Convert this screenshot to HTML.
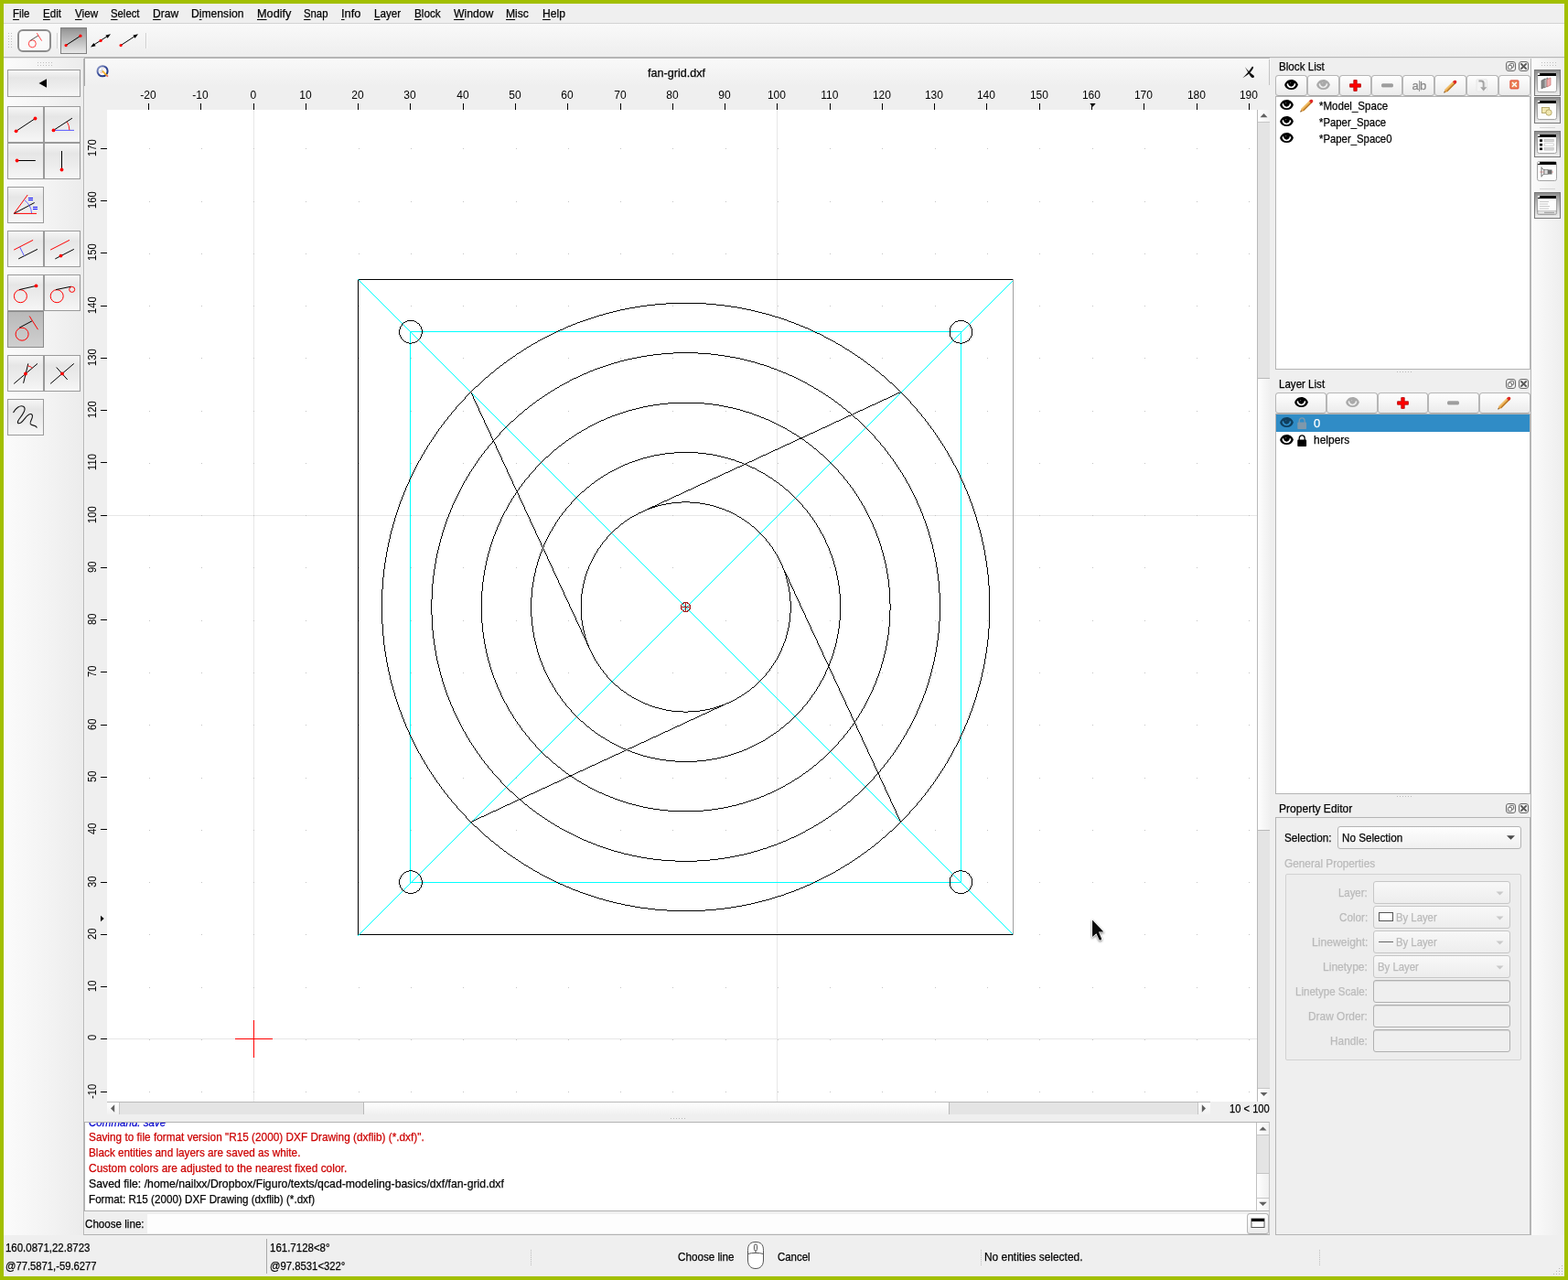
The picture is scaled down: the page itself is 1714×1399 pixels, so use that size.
<!DOCTYPE html>
<html><head><meta charset="utf-8"><title>QCAD - fan-grid.dxf</title>
<style>

html,body{margin:0;padding:0;}
body{width:1714px;height:1399px;overflow:hidden;background:#a2bf00;font-family:'Liberation Sans',sans-serif;font-size:12px;}
#win{position:absolute;left:0;top:0;width:1714px;height:1399px;overflow:hidden;}
#win div,#win span,#win svg{position:absolute;box-sizing:border-box;}
#txt{left:0;top:0;width:1714px;height:1399px;will-change:transform;}
.t{white-space:pre;line-height:1;font-family:'Liberation Sans',sans-serif;}
.t u{text-decoration:underline;text-underline-offset:1.5px;text-decoration-thickness:1px;}
.bg{left:4px;top:4px;width:1706px;height:1391px;background:#efefef;}
.btn{border:1px solid #9a9a9a;background:linear-gradient(#f6f6f6 0%,#e6e6e6 28%,#ececec 60%,#f6f6f6 100%);}
.btn.on{border-color:#8a8a8a;background:linear-gradient(#b9b9b9 0%,#c2c2c2 40%,#cfcfcf 100%);}
.pbtn{border:1px solid #b6b6b6;border-bottom-color:#a8a8a8;border-radius:3.5px;background:linear-gradient(#fefefe 0%,#f4f4f4 55%,#ebebeb 100%);}
.list{background:#fff;border:1px solid #b4b4b4;}
.combo{border:1px solid #b4b4b4;border-radius:3px;background:linear-gradient(#fefefe,#f0f0f0);}
.combo.dis{border-color:#c6c6c6;background:linear-gradient(#f8f8f8,#ededed);}
.edit{border:1px solid #b0b0b0;border-radius:3px;background:#efefef;box-shadow:inset 0 1px 0 #d6d6d6;}
.rbtn{border:1px solid #777;background:linear-gradient(#8c8c8c 0%,#b4b4b4 35%,#dedede 80%,#ededed 100%);}

</style></head>
<body>
<div id="win">
<div class="bg"></div>
<div style="left:4px;top:4px;width:1706px;height:21px;background:#efefef;"></div>
<div style="left:4px;top:25px;width:1706px;height:1px;background:#d3d3d3;"></div>
<div style="left:4px;top:26px;width:1706px;height:36px;background:linear-gradient(#f9f9f9,#eeeeee);"></div>
<div style="left:4px;top:62px;width:1706px;height:1px;background:#b6b6b6;"></div>
<div style="left:4px;top:63px;width:1706px;height:1px;background:#e6e6e6;"></div>
<div style="left:9px;top:36px;width:5px;height:18px;"><div style="left:0px;top:0px;width:1px;height:1px;background:#bdbdbd;"></div><div style="left:0px;top:3px;width:1px;height:1px;background:#bdbdbd;"></div><div style="left:0px;top:6px;width:1px;height:1px;background:#bdbdbd;"></div><div style="left:0px;top:9px;width:1px;height:1px;background:#bdbdbd;"></div><div style="left:0px;top:12px;width:1px;height:1px;background:#bdbdbd;"></div><div style="left:0px;top:15px;width:1px;height:1px;background:#bdbdbd;"></div><div style="left:3px;top:0px;width:1px;height:1px;background:#bdbdbd;"></div><div style="left:3px;top:3px;width:1px;height:1px;background:#bdbdbd;"></div><div style="left:3px;top:6px;width:1px;height:1px;background:#bdbdbd;"></div><div style="left:3px;top:9px;width:1px;height:1px;background:#bdbdbd;"></div><div style="left:3px;top:12px;width:1px;height:1px;background:#bdbdbd;"></div><div style="left:3px;top:15px;width:1px;height:1px;background:#bdbdbd;"></div></div>
<div style="left:19px;top:32px;width:37px;height:25px;border:2px solid #8d8d8d;border-radius:6px;background:#fafafa;"></div>
<div style="left:62px;top:36px;width:1px;height:17px;background:#d0d0d0;"></div>
<div style="left:63px;top:36px;width:1px;height:17px;background:#fbfbfb;"></div>
<div style="left:66px;top:30px;width:29px;height:29px;border:1px solid #808080;background:linear-gradient(#8f8f8f 0%,#9e9e9e 12%,#b4b4b4 40%,#d2d2d2 75%,#e8e8e8 100%);"></div>
<div style="left:159px;top:36px;width:1px;height:17px;background:#d0d0d0;"></div>
<div style="left:160px;top:36px;width:1px;height:17px;background:#fbfbfb;"></div>
<div style="left:4px;top:64px;width:87px;height:1286px;background:linear-gradient(90deg,#fbfbfb 0%,#f4f4f4 50%,#ececec 100%);"></div>
<div style="left:91px;top:64px;width:1px;height:1286px;background:#b7b7b7;"></div>
<div style="left:92px;top:94px;width:1px;height:1256px;background:#f5f5f5;"></div>
<div style="left:41px;top:68px;width:18px;height:4px;"><div style="left:0px;top:0px;width:1px;height:1px;background:#c0c0c0;"></div><div style="left:3px;top:0px;width:1px;height:1px;background:#c0c0c0;"></div><div style="left:6px;top:0px;width:1px;height:1px;background:#c0c0c0;"></div><div style="left:9px;top:0px;width:1px;height:1px;background:#c0c0c0;"></div><div style="left:12px;top:0px;width:1px;height:1px;background:#c0c0c0;"></div><div style="left:15px;top:0px;width:1px;height:1px;background:#c0c0c0;"></div><div style="left:0px;top:3px;width:1px;height:1px;background:#c0c0c0;"></div><div style="left:3px;top:3px;width:1px;height:1px;background:#c0c0c0;"></div><div style="left:6px;top:3px;width:1px;height:1px;background:#c0c0c0;"></div><div style="left:9px;top:3px;width:1px;height:1px;background:#c0c0c0;"></div><div style="left:12px;top:3px;width:1px;height:1px;background:#c0c0c0;"></div><div style="left:15px;top:3px;width:1px;height:1px;background:#c0c0c0;"></div></div>
<div class="btn" style="left:8px;top:76px;width:80px;height:30px;"></div>
<svg style="left:41px;top:84px" width="12" height="14" viewBox="0 0 12 14"><path d="M1.5 7 L10 2.2 L10 11.8 Z" fill="#000"/></svg>
<div class="btn" style="left:8px;top:116px;width:40px;height:40px;"></div>
<div class="btn" style="left:48px;top:116px;width:40px;height:40px;"></div>
<div class="btn" style="left:8px;top:156px;width:40px;height:40px;"></div>
<div class="btn" style="left:48px;top:156px;width:40px;height:40px;"></div>
<div class="btn" style="left:8px;top:204px;width:40px;height:40px;"></div>
<div class="btn" style="left:8px;top:252px;width:40px;height:40px;"></div>
<div class="btn" style="left:48px;top:252px;width:40px;height:40px;"></div>
<div class="btn" style="left:8px;top:300px;width:40px;height:40px;"></div>
<div class="btn" style="left:48px;top:300px;width:40px;height:40px;"></div>
<div class="btn on" style="left:8px;top:340px;width:40px;height:40px;"></div>
<div class="btn" style="left:8px;top:388px;width:40px;height:40px;"></div>
<div class="btn" style="left:48px;top:388px;width:40px;height:40px;"></div>
<div class="btn" style="left:8px;top:436px;width:40px;height:40px;"></div>
<div style="left:93px;top:64px;width:1296px;height:30px;background:linear-gradient(#f9f9f9,#efefef);"></div>
<div style="left:92px;top:63px;width:1296px;height:1px;background:#b4b4b4;"></div>
<div style="left:92px;top:64px;width:1px;height:30px;background:#aaaaaa;"></div>
<div style="left:1387px;top:65px;width:1px;height:29px;background:#c2c2c2;"></div>
<div style="left:93px;top:93px;width:1296px;height:27px;background:#efefef;"></div>
<div style="left:93px;top:120px;width:24px;height:1098px;background:#efefef;"></div>
<div style="left:117px;top:120px;width:1257px;height:1084px;background:#fff;"></div>
<div style="left:1374px;top:120px;width:14px;height:1084px;background:#e4e4e4;border-left:1px solid #b9b9b9;"></div>
<div style="left:1375px;top:120px;width:13px;height:14px;background:linear-gradient(90deg,#fff,#f1f1f1);border-bottom:1px solid #c6c6c6;"></div>
<div style="left:1375px;top:413px;width:13px;height:495px;background:linear-gradient(90deg,#fefefe,#f0f0f0);border-top:1px solid #b9b9b9;border-bottom:1px solid #b9b9b9;"></div>
<div style="left:1375px;top:1189px;width:13px;height:15px;background:linear-gradient(90deg,#fff,#f1f1f1);border-top:1px solid #c6c6c6;"></div>
<svg style="left:1375.5px;top:123px" width="11" height="8" viewBox="0 0 11 8"><path d="M1.5 5.2 L5.5 1.1 L9.5 5.2 Z" fill="#606060"/></svg>
<svg style="left:1375.5px;top:1192px" width="11" height="8" viewBox="0 0 11 8"><path d="M1.5 2 L5.5 6.1 L9.5 2 Z" fill="#606060"/></svg>
<div style="left:117px;top:1204px;width:1206px;height:14px;background:#e4e4e4;border-top:1px solid #b9b9b9;"></div>
<div style="left:117px;top:1205px;width:14px;height:13px;background:linear-gradient(#fff,#f1f1f1);border-right:1px solid #c6c6c6;"></div>
<div style="left:397px;top:1205px;width:641px;height:13px;background:linear-gradient(#fefefe,#f0f0f0);border-left:1px solid #b9b9b9;border-right:1px solid #b9b9b9;"></div>
<div style="left:1309px;top:1205px;width:14px;height:13px;background:linear-gradient(#fff,#f1f1f1);border-left:1px solid #c6c6c6;"></div>
<svg style="left:119px;top:1206px" width="8" height="11" viewBox="0 0 8 11"><path d="M6.2 1.2 L2 5.5 L6.2 9.8 Z" fill="#606060"/></svg>
<svg style="left:1312px;top:1206px" width="8" height="11" viewBox="0 0 8 11"><path d="M1.8 1.2 L6 5.5 L1.8 9.8 Z" fill="#606060"/></svg>
<div style="left:93px;top:1218px;width:1296px;height:8px;background:#efefef;"></div>
<div style="left:733px;top:1222px;width:18px;height:1px;"><div style="left:0px;top:0;width:1px;height:1px;background:#b9b9b9;"></div><div style="left:3px;top:0;width:1px;height:1px;background:#b9b9b9;"></div><div style="left:6px;top:0;width:1px;height:1px;background:#b9b9b9;"></div><div style="left:9px;top:0;width:1px;height:1px;background:#b9b9b9;"></div><div style="left:12px;top:0;width:1px;height:1px;background:#b9b9b9;"></div><div style="left:15px;top:0;width:1px;height:1px;background:#b9b9b9;"></div></div>
<div style="left:92px;top:1226px;width:1296px;height:98px;background:#fff;border:1px solid #b2b2b2;border-right-color:#c4c4c4;"></div>
<div style="left:1387px;top:1324px;width:1px;height:26px;background:#c4c4c4;"></div>
<div style="left:1373px;top:1227px;width:14px;height:96px;background:#e4e4e4;border-left:1px solid #c0c0c0;"></div>
<div style="left:1374px;top:1227px;width:13px;height:14px;background:linear-gradient(90deg,#fff,#f1f1f1);border-bottom:1px solid #c6c6c6;"></div>
<div style="left:1374px;top:1282px;width:13px;height:28px;background:linear-gradient(90deg,#fefefe,#f0f0f0);border-top:1px solid #c4c4c4;"></div>
<div style="left:1374px;top:1309px;width:13px;height:14px;background:linear-gradient(90deg,#fff,#f1f1f1);border-top:1px solid #c6c6c6;"></div>
<svg style="left:1374.5px;top:1229.5px" width="11" height="8" viewBox="0 0 11 8"><path d="M1.5 5.6 L5.5 1.5 L9.5 5.6 Z" fill="#606060"/></svg>
<svg style="left:1374.5px;top:1312px" width="11" height="8" viewBox="0 0 11 8"><path d="M1.2 1.8 L5.5 6 L9.8 1.8 Z" fill="#606060"/></svg>
<div style="left:93px;top:1324px;width:1294px;height:25px;background:#efefef;"></div>
<div style="left:161px;top:1327px;width:1203px;height:21px;background:#fdfdfd;"></div>
<div class="pbtn" style="left:1363px;top:1326px;width:24px;height:23px;"></div>
<svg style="left:1366.5px;top:1331px" width="17" height="12" viewBox="0 0 17 12"><rect x="1" y="1" width="14" height="9.5" fill="#fff" stroke="#555" stroke-width="1"/><rect x="1" y="1" width="14" height="3" fill="#000"/></svg>
<div style="left:92px;top:1349px;width:1296px;height:1px;background:#b2b2b2;"></div>
<div style="left:4px;top:1350px;width:1706px;height:45px;background:#efefef;"></div>
<div style="left:291px;top:1354px;width:1px;height:38px;background:#a9a9a9;"></div>
<div style="left:580px;top:1366px;width:1px;height:17px;"><div style="left:0;top:0px;width:1px;height:1px;background:#bdbdbd;"></div><div style="left:0;top:2px;width:1px;height:1px;background:#bdbdbd;"></div><div style="left:0;top:4px;width:1px;height:1px;background:#bdbdbd;"></div><div style="left:0;top:6px;width:1px;height:1px;background:#bdbdbd;"></div><div style="left:0;top:8px;width:1px;height:1px;background:#bdbdbd;"></div><div style="left:0;top:10px;width:1px;height:1px;background:#bdbdbd;"></div><div style="left:0;top:12px;width:1px;height:1px;background:#bdbdbd;"></div><div style="left:0;top:14px;width:1px;height:1px;background:#bdbdbd;"></div><div style="left:0;top:16px;width:1px;height:1px;background:#bdbdbd;"></div></div>
<div style="left:1072px;top:1366px;width:1px;height:17px;"><div style="left:0;top:0px;width:1px;height:1px;background:#bdbdbd;"></div><div style="left:0;top:2px;width:1px;height:1px;background:#bdbdbd;"></div><div style="left:0;top:4px;width:1px;height:1px;background:#bdbdbd;"></div><div style="left:0;top:6px;width:1px;height:1px;background:#bdbdbd;"></div><div style="left:0;top:8px;width:1px;height:1px;background:#bdbdbd;"></div><div style="left:0;top:10px;width:1px;height:1px;background:#bdbdbd;"></div><div style="left:0;top:12px;width:1px;height:1px;background:#bdbdbd;"></div><div style="left:0;top:14px;width:1px;height:1px;background:#bdbdbd;"></div><div style="left:0;top:16px;width:1px;height:1px;background:#bdbdbd;"></div></div>
<div style="left:1442px;top:1366px;width:1px;height:17px;"><div style="left:0;top:0px;width:1px;height:1px;background:#bdbdbd;"></div><div style="left:0;top:2px;width:1px;height:1px;background:#bdbdbd;"></div><div style="left:0;top:4px;width:1px;height:1px;background:#bdbdbd;"></div><div style="left:0;top:6px;width:1px;height:1px;background:#bdbdbd;"></div><div style="left:0;top:8px;width:1px;height:1px;background:#bdbdbd;"></div><div style="left:0;top:10px;width:1px;height:1px;background:#bdbdbd;"></div><div style="left:0;top:12px;width:1px;height:1px;background:#bdbdbd;"></div><div style="left:0;top:14px;width:1px;height:1px;background:#bdbdbd;"></div><div style="left:0;top:16px;width:1px;height:1px;background:#bdbdbd;"></div></div>
<div style="left:1698px;top:1383px;width:10px;height:10px;"><div style="left:9px;top:0px;width:1px;height:1px;background:#b5b5b5;"></div><div style="left:6px;top:3px;width:1px;height:1px;background:#b5b5b5;"></div><div style="left:9px;top:3px;width:1px;height:1px;background:#b5b5b5;"></div><div style="left:3px;top:6px;width:1px;height:1px;background:#b5b5b5;"></div><div style="left:6px;top:6px;width:1px;height:1px;background:#b5b5b5;"></div><div style="left:9px;top:6px;width:1px;height:1px;background:#b5b5b5;"></div><div style="left:0px;top:9px;width:1px;height:1px;background:#b5b5b5;"></div><div style="left:3px;top:9px;width:1px;height:1px;background:#b5b5b5;"></div><div style="left:6px;top:9px;width:1px;height:1px;background:#b5b5b5;"></div><div style="left:9px;top:9px;width:1px;height:1px;background:#b5b5b5;"></div></div>
<svg style="left:0;top:0" width="1714" height="1399" viewBox="0 0 1714 1399" shape-rendering="crispEdges">
<defs><clipPath id="cv"><rect x="117" y="120" width="1257" height="1084"/></clipPath></defs>
<path d="M162.5 113V120M219.5 113V120M277.5 113V120M334.5 113V120M391.5 113V120M448.5 113V120M506.5 113V120M563.5 113V120M620.5 113V120M678.5 113V120M735.5 113V120M792.5 113V120M849.5 113V120M907.5 113V120M964.5 113V120M1021.5 113V120M1078.5 113V120M1136.5 113V120M1193.5 113V120M1250.5 113V120M1308.5 113V120M1365.5 113V120M110 1193.5H117M110 1135.5H117M110 1078.5H117M110 1021.5H117M110 964.5H117M110 906.5H117M110 849.5H117M110 792.5H117M110 734.5H117M110 677.5H117M110 620.5H117M110 563.5H117M110 505.5H117M110 448.5H117M110 391.5H117M110 334.5H117M110 276.5H117M110 219.5H117M110 162.5H117" stroke="#000" stroke-width="1" fill="none"/>
<path d="M1191.3 113H1197.7L1194.5 116.8Z" fill="#000" shape-rendering="auto"/>
<path d="M110 1000.8V1007.2L113.7 1004Z" fill="#000" shape-rendering="auto"/>
<g clip-path="url(#cv)">
<path d="M277.5 120V1204M849.5 120V1204M117 1135.5H1374M117 563.5H1374" stroke="#e7e7e7" stroke-width="1" fill="none"/>
<path d="M163 1193.5h1M163 1136.5h1M163 1079.5h1M163 1021.5h1M163 964.5h1M163 907.5h1M163 850.5h1M163 792.5h1M163 735.5h1M163 678.5h1M163 620.5h1M163 563.5h1M163 506.5h1M163 449.5h1M163 391.5h1M163 334.5h1M163 277.5h1M163 220.5h1M163 162.5h1M220 1193.5h1M220 1136.5h1M220 1079.5h1M220 1021.5h1M220 964.5h1M220 907.5h1M220 850.5h1M220 792.5h1M220 735.5h1M220 678.5h1M220 620.5h1M220 563.5h1M220 506.5h1M220 449.5h1M220 391.5h1M220 334.5h1M220 277.5h1M220 220.5h1M220 162.5h1M277 1193.5h1M277 1136.5h1M277 1079.5h1M277 1021.5h1M277 964.5h1M277 907.5h1M277 850.5h1M277 792.5h1M277 735.5h1M277 678.5h1M277 620.5h1M277 563.5h1M277 506.5h1M277 449.5h1M277 391.5h1M277 334.5h1M277 277.5h1M277 220.5h1M277 162.5h1M334 1193.5h1M334 1136.5h1M334 1079.5h1M334 1021.5h1M334 964.5h1M334 907.5h1M334 850.5h1M334 792.5h1M334 735.5h1M334 678.5h1M334 620.5h1M334 563.5h1M334 506.5h1M334 449.5h1M334 391.5h1M334 334.5h1M334 277.5h1M334 220.5h1M334 162.5h1M392 1193.5h1M392 1136.5h1M392 1079.5h1M392 1021.5h1M392 964.5h1M392 907.5h1M392 850.5h1M392 792.5h1M392 735.5h1M392 678.5h1M392 620.5h1M392 563.5h1M392 506.5h1M392 449.5h1M392 391.5h1M392 334.5h1M392 277.5h1M392 220.5h1M392 162.5h1M449 1193.5h1M449 1136.5h1M449 1079.5h1M449 1021.5h1M449 964.5h1M449 907.5h1M449 850.5h1M449 792.5h1M449 735.5h1M449 678.5h1M449 620.5h1M449 563.5h1M449 506.5h1M449 449.5h1M449 391.5h1M449 334.5h1M449 277.5h1M449 220.5h1M449 162.5h1M506 1193.5h1M506 1136.5h1M506 1079.5h1M506 1021.5h1M506 964.5h1M506 907.5h1M506 850.5h1M506 792.5h1M506 735.5h1M506 678.5h1M506 620.5h1M506 563.5h1M506 506.5h1M506 449.5h1M506 391.5h1M506 334.5h1M506 277.5h1M506 220.5h1M506 162.5h1M564 1193.5h1M564 1136.5h1M564 1079.5h1M564 1021.5h1M564 964.5h1M564 907.5h1M564 850.5h1M564 792.5h1M564 735.5h1M564 678.5h1M564 620.5h1M564 563.5h1M564 506.5h1M564 449.5h1M564 391.5h1M564 334.5h1M564 277.5h1M564 220.5h1M564 162.5h1M621 1193.5h1M621 1136.5h1M621 1079.5h1M621 1021.5h1M621 964.5h1M621 907.5h1M621 850.5h1M621 792.5h1M621 735.5h1M621 678.5h1M621 620.5h1M621 563.5h1M621 506.5h1M621 449.5h1M621 391.5h1M621 334.5h1M621 277.5h1M621 220.5h1M621 162.5h1M678 1193.5h1M678 1136.5h1M678 1079.5h1M678 1021.5h1M678 964.5h1M678 907.5h1M678 850.5h1M678 792.5h1M678 735.5h1M678 678.5h1M678 620.5h1M678 563.5h1M678 506.5h1M678 449.5h1M678 391.5h1M678 334.5h1M678 277.5h1M678 220.5h1M678 162.5h1M735 1193.5h1M735 1136.5h1M735 1079.5h1M735 1021.5h1M735 964.5h1M735 907.5h1M735 850.5h1M735 792.5h1M735 735.5h1M735 678.5h1M735 620.5h1M735 563.5h1M735 506.5h1M735 449.5h1M735 391.5h1M735 334.5h1M735 277.5h1M735 220.5h1M735 162.5h1M793 1193.5h1M793 1136.5h1M793 1079.5h1M793 1021.5h1M793 964.5h1M793 907.5h1M793 850.5h1M793 792.5h1M793 735.5h1M793 678.5h1M793 620.5h1M793 563.5h1M793 506.5h1M793 449.5h1M793 391.5h1M793 334.5h1M793 277.5h1M793 220.5h1M793 162.5h1M850 1193.5h1M850 1136.5h1M850 1079.5h1M850 1021.5h1M850 964.5h1M850 907.5h1M850 850.5h1M850 792.5h1M850 735.5h1M850 678.5h1M850 620.5h1M850 563.5h1M850 506.5h1M850 449.5h1M850 391.5h1M850 334.5h1M850 277.5h1M850 220.5h1M850 162.5h1M907 1193.5h1M907 1136.5h1M907 1079.5h1M907 1021.5h1M907 964.5h1M907 907.5h1M907 850.5h1M907 792.5h1M907 735.5h1M907 678.5h1M907 620.5h1M907 563.5h1M907 506.5h1M907 449.5h1M907 391.5h1M907 334.5h1M907 277.5h1M907 220.5h1M907 162.5h1M964 1193.5h1M964 1136.5h1M964 1079.5h1M964 1021.5h1M964 964.5h1M964 907.5h1M964 850.5h1M964 792.5h1M964 735.5h1M964 678.5h1M964 620.5h1M964 563.5h1M964 506.5h1M964 449.5h1M964 391.5h1M964 334.5h1M964 277.5h1M964 220.5h1M964 162.5h1M1022 1193.5h1M1022 1136.5h1M1022 1079.5h1M1022 1021.5h1M1022 964.5h1M1022 907.5h1M1022 850.5h1M1022 792.5h1M1022 735.5h1M1022 678.5h1M1022 620.5h1M1022 563.5h1M1022 506.5h1M1022 449.5h1M1022 391.5h1M1022 334.5h1M1022 277.5h1M1022 220.5h1M1022 162.5h1M1079 1193.5h1M1079 1136.5h1M1079 1079.5h1M1079 1021.5h1M1079 964.5h1M1079 907.5h1M1079 850.5h1M1079 792.5h1M1079 735.5h1M1079 678.5h1M1079 620.5h1M1079 563.5h1M1079 506.5h1M1079 449.5h1M1079 391.5h1M1079 334.5h1M1079 277.5h1M1079 220.5h1M1079 162.5h1M1136 1193.5h1M1136 1136.5h1M1136 1079.5h1M1136 1021.5h1M1136 964.5h1M1136 907.5h1M1136 850.5h1M1136 792.5h1M1136 735.5h1M1136 678.5h1M1136 620.5h1M1136 563.5h1M1136 506.5h1M1136 449.5h1M1136 391.5h1M1136 334.5h1M1136 277.5h1M1136 220.5h1M1136 162.5h1M1194 1193.5h1M1194 1136.5h1M1194 1079.5h1M1194 1021.5h1M1194 964.5h1M1194 907.5h1M1194 850.5h1M1194 792.5h1M1194 735.5h1M1194 678.5h1M1194 620.5h1M1194 563.5h1M1194 506.5h1M1194 449.5h1M1194 391.5h1M1194 334.5h1M1194 277.5h1M1194 220.5h1M1194 162.5h1M1251 1193.5h1M1251 1136.5h1M1251 1079.5h1M1251 1021.5h1M1251 964.5h1M1251 907.5h1M1251 850.5h1M1251 792.5h1M1251 735.5h1M1251 678.5h1M1251 620.5h1M1251 563.5h1M1251 506.5h1M1251 449.5h1M1251 391.5h1M1251 334.5h1M1251 277.5h1M1251 220.5h1M1251 162.5h1M1308 1193.5h1M1308 1136.5h1M1308 1079.5h1M1308 1021.5h1M1308 964.5h1M1308 907.5h1M1308 850.5h1M1308 792.5h1M1308 735.5h1M1308 678.5h1M1308 620.5h1M1308 563.5h1M1308 506.5h1M1308 449.5h1M1308 391.5h1M1308 334.5h1M1308 277.5h1M1308 220.5h1M1308 162.5h1M1365 1193.5h1M1365 1136.5h1M1365 1079.5h1M1365 1021.5h1M1365 964.5h1M1365 907.5h1M1365 850.5h1M1365 792.5h1M1365 735.5h1M1365 678.5h1M1365 620.5h1M1365 563.5h1M1365 506.5h1M1365 449.5h1M1365 391.5h1M1365 334.5h1M1365 277.5h1M1365 220.5h1M1365 162.5h1" stroke="#c4c4c4" stroke-width="1" fill="none"/>
<path d="m391 305h716m-716 716h716" transform="translate(0,.5)" stroke="#000" stroke-width="1" fill="none"/><path d="m391 306v715" transform="translate(.5,0)" stroke="#000" stroke-width="1" fill="none"/>
<path d="m1107 305v717" transform="translate(.5,0)" stroke="#a0a0a0" stroke-width="1" fill="none"/>
<path d="m448 362h604m-604 1h2m599 1h2m-302 299h2m-2 1h2m298 299h2m-603 1h603" transform="translate(0,.5)" stroke="#00ffff" stroke-width="1" fill="none"/><path d="m391 305v1m0 716v1m1-717v1m0 714v1m1-715v1m0 712v1m1-713v1m0 710v1m1-711v1m0 708v1m1-709v1m0 706v1m1-707v1m0 704v1m1-705v1m0 702v1m1-703v1m0 700v1m1-701v1m0 698v1m1-699v1m0 696v1m1-697v1m0 694v1m1-695v1m0 692v1m1-693v1m0 690v1m1-691v1m0 688v1m1-689v1m0 686v1m1-687v1m0 684v1m1-685v1m0 682v1m1-683v1m0 680v1m1-681v1m0 678v1m1-679v1m0 676v1m1-677v1m0 674v1m1-675v1m0 672v1m1-673v1m0 670v1m1-671v1m0 668v1m1-669v1m0 666v1m1-667v1m0 664v1m1-665v1m0 662v1m1-663v1m0 660v1m1-661v1m0 658v1m1-659v1m0 656v1m1-657v1m0 654v1m1-655v1m0 652v1m1-653v1m0 650v1m1-651v1m0 648v1m1-649v1m0 646v1m1-647v1m0 644v1m1-645v1m0 642v1m1-643v1m0 640v1m1-641v1m0 638v1m1-639v1m0 636v1m1-637v1m0 634v1m1-635v1m0 632v1m1-633v1m0 630v1m1-631v1m0 628v1m1-629v1m0 626v1m1-627v1m0 624v1m1-625v1m0 622v1m1-623v1m0 620v1m1-621v1m0 618v1m1-619v1m0 616v1m1-617v1m0 614v1m1-615v1m0 612v1m1-613v1m0 610v1m1-611v1m0 608v1m1-609v1m0 606v1m1-607v1m0 604v1m1-603v600m0 1v1m2-602v1m0 598v1m1-599v1m0 596v1m1-597v1m0 594v1m1-595v1m0 592v1m1-593v1m0 590v1m1-591v1m0 588v1m1-589v1m0 586v1m1-587v1m0 584v1m1-585v1m0 582v1m1-583v1m0 580v1m1-581v1m0 578v1m1-579v1m0 576v1m1-577v1m0 574v1m1-575v1m0 572v1m1-573v1m0 570v1m1-571v1m0 568v1m1-569v1m0 566v1m1-567v1m0 564v1m1-565v1m0 562v1m1-563v1m0 560v1m1-561v1m0 558v1m1-559v1m0 556v1m1-557v1m0 554v1m1-555v1m0 552v1m1-553v1m0 550v1m1-551v1m0 548v1m1-549v1m0 546v1m1-547v1m0 544v1m1-545v1m0 542v1m1-543v1m0 540v1m1-541v1m0 538v1m1-539v1m0 536v1m1-537v1m0 534v1m1-535v1m0 532v1m1-533v1m0 530v1m1-531v1m0 528v1m1-529v1m0 526v1m1-527v1m0 524v1m1-525v1m0 522v1m1-523v1m0 520v1m1-521v1m0 518v1m1-519v1m0 516v1m1-517v1m0 514v1m1-515v1m0 512v1m1-513v1m0 510v1m1-511v1m0 508v1m1-509v1m0 506v1m1-507v1m0 504v1m1-505v1m0 502v1m1-503v1m0 500v1m1-501v1m0 498v1m1-499v1m0 496v1m1-497v1m0 494v1m1-495v1m0 492v1m1-493v1m0 490v1m1-491v1m0 488v1m1-489v1m0 486v1m1-487v1m0 484v1m1-485v1m0 482v1m1-483v1m0 480v1m1-481v1m0 478v1m1-479v1m0 476v1m1-477v1m0 474v1m1-475v1m0 472v1m1-473v1m0 470v1m1-471v1m0 468v1m1-469v1m0 466v1m1-467v1m0 464v1m1-465v1m0 462v1m1-463v1m0 460v1m1-461v1m0 458v1m1-459v1m0 456v1m1-457v1m0 454v1m1-455v1m0 452v1m1-453v1m0 450v1m1-451v1m0 448v1m1-449v1m0 446v1m1-447v1m0 444v1m1-445v1m0 442v1m1-443v1m0 440v1m1-441v1m0 438v1m1-439v1m0 436v1m1-437v1m0 434v1m1-435v1m0 432v1m1-433v1m0 430v1m1-431v1m0 428v1m1-429v1m0 426v1m1-427v1m0 424v1m1-425v1m0 422v1m1-423v1m0 420v1m1-421v1m0 418v1m1-419v1m0 416v1m1-417v1m0 414v1m1-415v1m0 412v1m1-413v1m0 410v1m1-411v1m0 408v1m1-409v1m0 406v1m1-407v1m0 404v1m1-405v1m0 402v1m1-403v1m0 400v1m1-401v1m0 398v1m1-399v1m0 396v1m1-397v1m0 394v1m1-395v1m0 392v1m1-393v1m0 390v1m1-391v1m0 388v1m1-389v1m0 386v1m1-387v1m0 384v1m1-385v1m0 382v1m1-383v1m0 380v1m1-381v1m0 378v1m1-379v1m0 376v1m1-377v1m0 374v1m1-375v1m0 372v1m1-373v1m0 370v1m1-371v1m0 368v1m1-369v1m0 366v1m1-367v1m0 364v1m1-365v1m0 362v1m1-363v1m0 360v1m1-361v1m0 358v1m1-359v1m0 356v1m1-357v1m0 354v1m1-355v1m0 352v1m1-353v1m0 350v1m1-351v1m0 348v1m1-349v1m0 346v1m1-347v1m0 344v1m1-345v1m0 342v1m1-343v1m0 340v1m1-341v1m0 338v1m1-339v1m0 336v1m1-337v1m0 334v1m1-335v1m0 332v1m1-333v1m0 330v1m1-331v1m0 328v1m1-329v1m0 326v1m1-327v1m0 324v1m1-325v1m0 322v1m1-323v1m0 320v1m1-321v1m0 318v1m1-319v1m0 316v1m1-317v1m0 314v1m1-315v1m0 312v1m1-313v1m0 310v1m1-311v1m0 308v1m1-309v1m0 306v1m1-307v1m0 304v1m1-305v1m0 302v1m1-303v1m0 300v1m1-301v1m0 298v1m1-299v1m0 296v1m1-297v1m0 294v1m1-295v1m0 292v1m1-293v1m0 290v1m1-291v1m0 288v1m1-289v1m0 286v1m1-287v1m0 284v1m1-285v1m0 282v1m1-283v1m0 280v1m1-281v1m0 278v1m1-279v1m0 276v1m1-277v1m0 274v1m1-275v1m0 272v1m1-273v1m0 270v1m1-271v1m0 268v1m1-269v1m0 266v1m1-267v1m0 264v1m1-265v1m0 262v1m1-263v1m0 260v1m1-261v1m0 258v1m1-259v1m0 256v1m1-257v1m0 254v1m1-255v1m0 252v1m1-253v1m0 250v1m1-251v1m0 248v1m1-249v1m0 246v1m1-247v1m0 244v1m1-245v1m0 242v1m1-243v1m0 240v1m1-241v1m0 238v1m1-239v1m0 236v1m1-237v1m0 234v1m1-235v1m0 232v1m1-233v1m0 230v1m1-231v1m0 228v1m1-229v1m0 226v1m1-227v1m0 224v1m1-225v1m0 222v1m1-223v1m0 220v1m1-221v1m0 218v1m1-219v1m0 216v1m1-217v1m0 214v1m1-215v1m0 212v1m1-213v1m0 210v1m1-211v1m0 208v1m1-209v1m0 206v1m1-207v1m0 204v1m1-205v1m0 202v1m1-203v1m0 200v1m1-201v1m0 198v1m1-199v1m0 196v1m1-197v1m0 194v1m1-195v1m0 192v1m1-193v1m0 190v1m1-191v1m0 188v1m1-189v1m0 186v1m1-187v1m0 184v1m1-185v1m0 182v1m1-183v1m0 180v1m1-181v1m0 178v1m1-179v1m0 176v1m1-177v1m0 174v1m1-175v1m0 172v1m1-173v1m0 170v1m1-171v1m0 168v1m1-169v1m0 166v1m1-167v1m0 164v1m1-165v1m0 162v1m1-163v1m0 160v1m1-161v1m0 158v1m1-159v1m0 156v1m1-157v1m0 154v1m1-155v1m0 152v1m1-153v1m0 150v1m1-151v1m0 148v1m1-149v1m0 146v1m1-147v1m0 144v1m1-145v1m0 142v1m1-143v1m0 140v1m1-141v1m0 138v1m1-139v1m0 136v1m1-137v1m0 134v1m1-135v1m0 132v1m1-133v1m0 130v1m1-131v1m0 128v1m1-129v1m0 126v1m1-127v1m0 124v1m1-125v1m0 122v1m1-123v1m0 120v1m1-121v1m0 118v1m1-119v1m0 116v1m1-117v1m0 114v1m1-115v1m0 112v1m1-113v1m0 110v1m1-111v1m0 108v1m1-109v1m0 106v1m1-107v1m0 104v1m1-105v1m0 102v1m1-103v1m0 100v1m1-101v1m0 98v1m1-99v1m0 96v1m1-97v1m0 94v1m1-95v1m0 92v1m1-93v1m0 90v1m1-91v1m0 88v1m1-89v1m0 86v1m1-87v1m0 84v1m1-85v1m0 82v1m1-83v1m0 80v1m1-81v1m0 78v1m1-79v1m0 76v1m1-77v1m0 74v1m1-75v1m0 72v1m1-73v1m0 70v1m1-71v1m0 68v1m1-69v1m0 66v1m1-67v1m0 64v1m1-65v1m0 62v1m1-63v1m0 60v1m1-61v1m0 58v1m1-59v1m0 56v1m1-57v1m0 54v1m1-55v1m0 52v1m1-53v1m0 50v1m1-51v1m0 48v1m1-49v1m0 46v1m1-47v1m0 44v1m1-45v1m0 42v1m1-43v1m0 40v1m1-41v1m0 38v1m1-39v1m0 36v1m1-37v1m0 34v1m1-35v1m0 32v1m1-33v1m0 30v1m1-31v1m0 28v1m1-29v1m0 26v1m1-27v1m0 24v1m1-25v1m0 22v1m1-23v1m0 20v1m1-21v1m0 18v1m1-19v1m0 16v1m1-17v1m0 14v1m1-15v1m0 12v1m1-13v1m0 10v1m1-11v1m0 8v1m1-9v1m0 6v1m1-7v1m0 4v1m1-5v1m0 2v1m3-4v1m0 2v1m1-5v1m0 4v1m1-7v1m0 6v1m1-9v1m0 8v1m1-11v1m0 10v1m1-13v1m0 12v1m1-15v1m0 14v1m1-17v1m0 16v1m1-19v1m0 18v1m1-21v1m0 20v1m1-23v1m0 22v1m1-25v1m0 24v1m1-27v1m0 26v1m1-29v1m0 28v1m1-31v1m0 30v1m1-33v1m0 32v1m1-35v1m0 34v1m1-37v1m0 36v1m1-39v1m0 38v1m1-41v1m0 40v1m1-43v1m0 42v1m1-45v1m0 44v1m1-47v1m0 46v1m1-49v1m0 48v1m1-51v1m0 50v1m1-53v1m0 52v1m1-55v1m0 54v1m1-57v1m0 56v1m1-59v1m0 58v1m1-61v1m0 60v1m1-63v1m0 62v1m1-65v1m0 64v1m1-67v1m0 66v1m1-69v1m0 68v1m1-71v1m0 70v1m1-73v1m0 72v1m1-75v1m0 74v1m1-77v1m0 76v1m1-79v1m0 78v1m1-81v1m0 80v1m1-83v1m0 82v1m1-85v1m0 84v1m1-87v1m0 86v1m1-89v1m0 88v1m1-91v1m0 90v1m1-93v1m0 92v1m1-95v1m0 94v1m1-97v1m0 96v1m1-99v1m0 98v1m1-101v1m0 100v1m1-103v1m0 102v1m1-105v1m0 104v1m1-107v1m0 106v1m1-109v1m0 108v1m1-111v1m0 110v1m1-113v1m0 112v1m1-115v1m0 114v1m1-117v1m0 116v1m1-119v1m0 118v1m1-121v1m0 120v1m1-123v1m0 122v1m1-125v1m0 124v1m1-127v1m0 126v1m1-129v1m0 128v1m1-131v1m0 130v1m1-133v1m0 132v1m1-135v1m0 134v1m1-137v1m0 136v1m1-139v1m0 138v1m1-141v1m0 140v1m1-143v1m0 142v1m1-145v1m0 144v1m1-147v1m0 146v1m1-149v1m0 148v1m1-151v1m0 150v1m1-153v1m0 152v1m1-155v1m0 154v1m1-157v1m0 156v1m1-159v1m0 158v1m1-161v1m0 160v1m1-163v1m0 162v1m1-165v1m0 164v1m1-167v1m0 166v1m1-169v1m0 168v1m1-171v1m0 170v1m1-173v1m0 172v1m1-175v1m0 174v1m1-177v1m0 176v1m1-179v1m0 178v1m1-181v1m0 180v1m1-183v1m0 182v1m1-185v1m0 184v1m1-187v1m0 186v1m1-189v1m0 188v1m1-191v1m0 190v1m1-193v1m0 192v1m1-195v1m0 194v1m1-197v1m0 196v1m1-199v1m0 198v1m1-201v1m0 200v1m1-203v1m0 202v1m1-205v1m0 204v1m1-207v1m0 206v1m1-209v1m0 208v1m1-211v1m0 210v1m1-213v1m0 212v1m1-215v1m0 214v1m1-217v1m0 216v1m1-219v1m0 218v1m1-221v1m0 220v1m1-223v1m0 222v1m1-225v1m0 224v1m1-227v1m0 226v1m1-229v1m0 228v1m1-231v1m0 230v1m1-233v1m0 232v1m1-235v1m0 234v1m1-237v1m0 236v1m1-239v1m0 238v1m1-241v1m0 240v1m1-243v1m0 242v1m1-245v1m0 244v1m1-247v1m0 246v1m1-249v1m0 248v1m1-251v1m0 250v1m1-253v1m0 252v1m1-255v1m0 254v1m1-257v1m0 256v1m1-259v1m0 258v1m1-261v1m0 260v1m1-263v1m0 262v1m1-265v1m0 264v1m1-267v1m0 266v1m1-269v1m0 268v1m1-271v1m0 270v1m1-273v1m0 272v1m1-275v1m0 274v1m1-277v1m0 276v1m1-279v1m0 278v1m1-281v1m0 280v1m1-283v1m0 282v1m1-285v1m0 284v1m1-287v1m0 286v1m1-289v1m0 288v1m1-291v1m0 290v1m1-293v1m0 292v1m1-295v1m0 294v1m1-297v1m0 296v1m1-299v1m0 298v1m1-301v1m0 300v1m1-303v1m0 302v1m1-305v1m0 304v1m1-307v1m0 306v1m1-309v1m0 308v1m1-311v1m0 310v1m1-313v1m0 312v1m1-315v1m0 314v1m1-317v1m0 316v1m1-319v1m0 318v1m1-321v1m0 320v1m1-323v1m0 322v1m1-325v1m0 324v1m1-327v1m0 326v1m1-329v1m0 328v1m1-331v1m0 330v1m1-333v1m0 332v1m1-335v1m0 334v1m1-337v1m0 336v1m1-339v1m0 338v1m1-341v1m0 340v1m1-343v1m0 342v1m1-345v1m0 344v1m1-347v1m0 346v1m1-349v1m0 348v1m1-351v1m0 350v1m1-353v1m0 352v1m1-355v1m0 354v1m1-357v1m0 356v1m1-359v1m0 358v1m1-361v1m0 360v1m1-363v1m0 362v1m1-365v1m0 364v1m1-367v1m0 366v1m1-369v1m0 368v1m1-371v1m0 370v1m1-373v1m0 372v1m1-375v1m0 374v1m1-377v1m0 376v1m1-379v1m0 378v1m1-381v1m0 380v1m1-383v1m0 382v1m1-385v1m0 384v1m1-387v1m0 386v1m1-389v1m0 388v1m1-391v1m0 390v1m1-393v1m0 392v1m1-395v1m0 394v1m1-397v1m0 396v1m1-399v1m0 398v1m1-401v1m0 400v1m1-403v1m0 402v1m1-405v1m0 404v1m1-407v1m0 406v1m1-409v1m0 408v1m1-411v1m0 410v1m1-413v1m0 412v1m1-415v1m0 414v1m1-417v1m0 416v1m1-419v1m0 418v1m1-421v1m0 420v1m1-423v1m0 422v1m1-425v1m0 424v1m1-427v1m0 426v1m1-429v1m0 428v1m1-431v1m0 430v1m1-433v1m0 432v1m1-435v1m0 434v1m1-437v1m0 436v1m1-439v1m0 438v1m1-441v1m0 440v1m1-443v1m0 442v1m1-445v1m0 444v1m1-447v1m0 446v1m1-449v1m0 448v1m1-451v1m0 450v1m1-453v1m0 452v1m1-455v1m0 454v1m1-457v1m0 456v1m1-459v1m0 458v1m1-461v1m0 460v1m1-463v1m0 462v1m1-465v1m0 464v1m1-467v1m0 466v1m1-469v1m0 468v1m1-471v1m0 470v1m1-473v1m0 472v1m1-475v1m0 474v1m1-477v1m0 476v1m1-479v1m0 478v1m1-481v1m0 480v1m1-483v1m0 482v1m1-485v1m0 484v1m1-487v1m0 486v1m1-489v1m0 488v1m1-491v1m0 490v1m1-493v1m0 492v1m1-495v1m0 494v1m1-497v1m0 496v1m1-499v1m0 498v1m1-501v1m0 500v1m1-503v1m0 502v1m1-505v1m0 504v1m1-507v1m0 506v1m1-509v1m0 508v1m1-511v1m0 510v1m1-513v1m0 512v1m1-515v1m0 514v1m1-517v1m0 516v1m1-519v1m0 518v1m1-521v1m0 520v1m1-523v1m0 522v1m1-525v1m0 524v1m1-527v1m0 526v1m1-529v1m0 528v1m1-531v1m0 530v1m1-533v1m0 532v1m1-535v1m0 534v1m1-537v1m0 536v1m1-539v1m0 538v1m1-541v1m0 540v1m1-543v1m0 542v1m1-545v1m0 544v1m1-547v1m0 546v1m1-549v1m0 548v1m1-551v1m0 550v1m1-553v1m0 552v1m1-555v1m0 554v1m1-557v1m0 556v1m1-559v1m0 558v1m1-561v1m0 560v1m1-563v1m0 562v1m1-565v1m0 564v1m1-567v1m0 566v1m1-569v1m0 568v1m1-571v1m0 570v1m1-573v1m0 572v1m1-575v1m0 574v1m1-577v1m0 576v1m1-579v1m0 578v1m1-581v1m0 580v1m1-583v1m0 582v1m1-585v1m0 584v1m1-587v1m0 586v1m1-589v1m0 588v1m1-591v1m0 590v1m1-593v1m0 592v1m1-595v1m0 594v1m1-597v1m0 596v1m2-600v1m0 1v598m1 2v1m1-605v1m0 604v1m1-607v1m0 606v1m1-609v1m0 608v1m1-611v1m0 610v1m1-613v1m0 612v1m1-615v1m0 614v1m1-617v1m0 616v1m1-619v1m0 618v1m1-621v1m0 620v1m1-623v1m0 622v1m1-625v1m0 624v1m1-627v1m0 626v1m1-629v1m0 628v1m1-631v1m0 630v1m1-633v1m0 632v1m1-635v1m0 634v1m1-637v1m0 636v1m1-639v1m0 638v1m1-641v1m0 640v1m1-643v1m0 642v1m1-645v1m0 644v1m1-647v1m0 646v1m1-649v1m0 648v1m1-651v1m0 650v1m1-653v1m0 652v1m1-655v1m0 654v1m1-657v1m0 656v1m1-659v1m0 658v1m1-661v1m0 660v1m1-663v1m0 662v1m1-665v1m0 664v1m1-667v1m0 666v1m1-669v1m0 668v1m1-671v1m0 670v1m1-673v1m0 672v1m1-675v1m0 674v1m1-677v1m0 676v1m1-679v1m0 678v1m1-681v1m0 680v1m1-683v1m0 682v1m1-685v1m0 684v1m1-687v1m0 686v1m1-689v1m0 688v1m1-691v1m0 690v1m1-693v1m0 692v1m1-695v1m0 694v1m1-697v1m0 696v1m1-699v1m0 698v1m1-701v1m0 700v1m1-703v1m0 702v1m1-705v1m0 704v1m1-707v1m0 706v1m1-709v1m0 708v1m1-711v1m0 710v1m1-713v1m0 712v1" transform="translate(.5,0)" stroke="#00ffff" stroke-width="1" fill="none"/>
<path d="m728 331h44m-56 1h12m44 0h11m-76 1h9m67 0h9m-92 1h7m85 0h7m-105 1h6m99 0h7m-118 1h6m112 0h5m-128 1h5m123 0h5m-138 1h5m133 0h5m-147 1h4m143 0h4m-155 1h4m151 0h4m-163 1h4m159 0h4m-171 1h4m167 0h4m-178 1h3m175 0h4m-186 1h4m182 0h3m-192 1h3m189 0h3m-198 1h3m195 0h4m-205 1h3m202 0h3m-211 1h3m208 0h3m-217 1h3m214 0h3m-415 1h8m184 0h3m220 0h2m185 0h7m-611 1h2m8 0h2m179 0h3m225 0h3m179 0h3m7 0h2m-615 1h2m188 0h3m231 0h3m188 0h2m-602 1h2m171 0h2m237 0h2m-244 1h3m241 0h3m-249 1h2m247 0h2m-254 1h3m251 0h3m-259 1h2m257 0h2m-263 1h2m261 0h3m-268 1h2m266 0h2m-273 1h3m270 0h2m-277 1h2m275 0h2m-281 1h2m279 0h2m-285 1h2m283 0h2m-289 1h2m287 0h3m-294 1h2m292 0h2m-298 1h2m296 0h2m-302 1h2m-4 1h2m303 0h2m-309 1h2m307 0h2m-313 1h2m311 0h2m-317 1h2m315 0h2m-321 1h2m319 0h2m146 0h2m-617 1h2m10 0h2m455 0h2m130 0h2m10 0h2m-613 1h3m3 0h4m131 0h2m458 0h4m3 0h3m-608 1h3m133 0h2m329 0h2m133 0h3m-471 1h2m333 0h2m0 1h2m-342 1h2m-4 1h2m343 0h2m-350 2h2m349 0h2m0 1h2m-358 1h2m357 1h2m-364 1h2m167 0h27m-198 1h2m156 0h13m27 0h14m155 0h2m-220 1h9m54 0h8m-78 1h7m71 0h7m143 0h2m-376 1h2m138 0h6m85 0h6m-102 1h5m97 0h6m134 0h2m-382 1h2m131 0h5m108 0h5m-123 1h5m118 0h4m128 0h2m-388 1h2m125 0h4m127 0h4m-139 1h4m135 0h4m-146 1h3m143 0h4m120 0h2m-396 1h2m118 0h4m150 0h3m-160 1h3m157 0h3m-166 1h3m163 0h4m114 0h2m-404 1h2m113 0h3m170 0h3m-179 1h3m176 0h3m-185 1h3m182 0h2m110 0h2m-412 1h2m108 0h3m187 0h3m-196 1h3m193 0h3m-201 1h2m199 0h2m-206 1h3m203 0h3m104 0h2m-317 1h2m209 0h2m-319 1h2m102 0h2m213 0h3m-221 1h3m218 0h2m-225 1h2m223 0h2m-229 1h2m227 0h3m98 0h2m-334 1h2m232 0h2m-337 1h2m97 0h2m236 0h2m-243 1h3m240 0h2m-247 1h2m245 0h2m-251 1h2m249 0h2m0 1h2m-258 1h2m256 0h2m-262 1h2m260 0h2m91 0h2m-359 1h2m-4 1h2m267 0h2m-273 1h2m271 0h2m-367 1h2m365 0h2m-280 1h2m-4 1h2m281 0h2m0 1h2m-290 1h2m-4 1h2m291 0h2m0 1h2m-300 1h2m380 0h3m-84 1h2m77 0h2m-385 1h2m379 0h2m-76 1h2m70 0h2m-384 1h2m378 0h2m-69 1h2m63 0h2m-383 1h2m377 0h2m-62 1h2m55 0h3m-382 1h2m375 0h2m-4 1h2m-51 1h2m45 0h2m-379 1h2m145 0h40m188 0h2m-239 1h9m40 0h9m177 0h2m-244 1h7m58 0h7m131 0h2m34 0h3m-377 1h2m127 0h6m72 0h5m160 0h2m-250 1h5m83 0h5m153 0h2m-252 1h4m93 0h5m146 0h2m-254 1h4m102 0h4m117 0h2m21 0h2m-373 1h2m115 0h4m110 0h4m134 0h2m-258 1h4m118 0h3m128 0h3m-259 1h3m125 0h3m123 0h2m-259 1h3m131 0h4m108 0h2m7 0h2m-260 1h3m138 0h3m112 0h2m-368 1h2m105 0h3m144 0h2m108 0h2m-262 1h3m149 0h3m103 0h2m-263 1h3m155 0h3m97 0h3m-263 1h2m161 0h2m93 0h2m-263 1h3m165 0h3m88 0h2m-263 1h2m171 0h2m84 0h2m12 0h2m-277 1h2m175 0h3m79 0h2m-264 1h3m180 0h2m75 0h2m-360 1h2m94 0h2m185 0h2m70 0h3m-264 1h2m189 0h2m66 0h2m-263 1h2m193 0h2m62 0h2m-263 1h2m197 0h2m58 0h2m-263 1h2m201 0h2m54 0h2m-263 1h2m205 0h2m50 0h2m-263 1h2m209 0h2m46 0h2m-48 1h2m41 0h3m-262 1h2m216 0h2m37 0h2m-261 1h2m255 0h2m-261 1h2m223 0h2m30 0h2m-32 1h2m26 0h2m-260 1h2m254 0h2m-260 1h2m233 0h2m18 0h3m-21 1h2m14 0h2m-258 1h2m252 0h2m-13 1h2m7 0h2m-257 1h2m251 0h2m-6 1h4m-256 1h2m249 0h4m-6 1h2m4 0h2m-260 1h2m248 0h2m-333 1h2m327 0h2m-4 1h2m14 0h2m-268 1h2m246 0h2m-5 1h3m-5 1h2m25 0h2m-276 1h2m243 0h2m-4 1h2m-4 1h2m-4 1h2m38 0h2m-286 1h2m239 0h3m-5 1h2m-4 1h2m-108 1h26m78 0h2m-116 1h10m26 0h9m67 0h2m-120 1h6m45 0h7m58 0h2m58 0h2m-184 1h6m58 0h5m50 0h3m-126 1h4m69 0h4m44 0h2m-237 1h2m108 0h4m77 0h4m38 0h2m-129 1h4m85 0h4m32 0h2m-130 1h3m93 0h3m27 0h2m-131 1h3m99 0h4m21 0h2m-132 1h3m106 0h2m17 0h2m-133 1h3m111 0h3m11 0h3m-134 1h3m117 0h3m6 0h2m-133 1h2m123 0h2m2 0h2m-134 1h3m127 0h3m-135 1h2m128 0h2m3 0h2m-139 1h2m128 0h2m7 0h2m-143 1h2m127 0h3m11 0h2m-147 1h2m127 0h2m16 0h3m-152 1h2m127 0h2m21 0h2m-156 1h2m127 0h2m-133 1h2m127 0h2m28 0h2m-163 1h2m127 0h2m32 0h2m-167 1h2m126 0h3m36 0h2m-43 1h2m41 0h2m-174 1h2m125 0h2m-131 1h2m125 0h2m48 0h2m-54 1h2m-130 1h2m124 0h2m55 0h2m-62 1h3m59 0h2m-190 1h2m122 0h2m-4 1h2m-127 1h2m121 0h2m70 0h2m-76 1h2m-4 1h2m77 0h2m-204 1h2m118 0h3m-5 1h2m-4 1h2m88 0h2m-94 1h2m-121 1h2m115 0h2m-4 1h2m-4 1h2m-5 1h3m104 0h2m-297 1h2m184 0h2m-116 1h2m110 0h2m-186 1h2m180 0h2m-4 1h2m-4 1h2m-5 1h3m-5 1h2m-4 1h2m-4 1h2m-4 1h2m-4 1h2m-5 1h3m-5 1h2m19 0h9m-32 1h2m10 0h11m9 0h11m-45 1h2m6 0h6m31 0h6m-53 1h2m3 0h5m43 0h5m-60 1h2m1 0h4m53 0h4m-67 1h6m61 0h3m-72 1h5m67 0h3m-77 1h4m73 0h3m-82 1h3m79 0h3m-87 1h2m85 0h2m-91 1h2m89 0h3m-96 1h2m94 0h2m-101 1h3m98 0h2m0 1h2m-108 1h2m106 0h2m-112 1h2m-4 1h2m113 0h2m-119 1h2m117 0h2m-124 2h2m123 0h2m-130 2h2m129 0h2m1 2h2m-140 1h2m141 3h2m-151 2h2m182 48h2m-1 2h2m-2 1h2m-1 1h2m-2 1h2m-223 65h2m-2 1h2m-1 1h2m-2 1h2m-1 2h2m-1 3h2m-1 2h2m261 21h2m-2 1h2m-2 2h2m-234 20h2m147 2h2m-145 3h2m136 1h2m-137 1h2m130 1h2m-130 2h2m123 0h2m-125 1h2m118 1h2m-119 1h2m113 0h2m-115 1h2m0 1h2m106 0h2m-108 1h2m102 0h2m-104 1h2m98 0h2m-100 1h2m94 0h2m-96 1h2m89 0h3m-92 1h3m84 0h2m-86 1h2m79 0h3m-82 1h3m73 0h4m-77 1h3m67 0h5m-72 1h4m60 0h3m1 0h2m-66 1h4m52 0h4m1 0h3m-60 1h4m43 0h5m3 0h2m-53 1h6m31 0h6m6 0h2m-45 1h13m5 0h13m10 0h2m-30 1h5m21 0h2m-4 1h2m-5 1h3m-5 1h2m-4 1h2m-4 1h2m-4 1h2m-4 1h2m-5 1h3m-5 1h2m-120 1h2m114 0h2m180 0h2m-186 1h2m-4 1h2m111 0h2m71 0h2m-190 1h2m-4 1h2m-5 1h3m-101 1h2m94 0h2m-4 1h2m116 0h2m-122 1h2m-4 1h2m-87 1h2m81 0h2m-5 1h3m119 0h2m-126 1h2m-76 1h2m70 0h2m121 0h2m-127 1h2m-69 1h2m63 0h2m122 0h2m-128 1h2m-62 1h2m55 0h3m123 0h2m-183 1h2m51 0h2m-4 1h2m125 0h2m-177 1h2m44 0h2m-46 1h2m40 0h2m126 0h2m-132 1h2m126 0h2m-167 1h2m32 0h3m126 0h2m-163 1h2m28 0h2m127 0h2m-159 1h2m24 0h2m127 0h2m-155 1h2m20 0h2m127 0h2m-151 1h2m16 0h2m127 0h2m-147 1h2m12 0h2m127 0h2m-143 1h2m7 0h3m127 0h2m-139 1h3m2 0h2m128 0h2m-134 1h2m127 0h3m-134 1h2m2 0h3m122 0h2m-133 1h2m7 0h2m117 0h3m-133 1h2m11 0h3m111 0h3m-132 1h2m16 0h3m105 0h3m-132 1h3m21 0h3m99 0h3m-131 1h2m27 0h3m93 0h3m-130 1h2m32 0h4m85 0h4m-199 1h2m68 0h2m38 0h4m77 0h4m-127 1h2m44 0h5m68 0h4m-125 1h2m51 0h5m57 0h6m-124 1h3m58 0h7m44 0h6m119 0h2m-241 1h2m68 0h10m24 0h10m-116 1h2m80 0h24m-108 1h2m-51 1h2m45 0h2m-4 1h2m-5 1h3m240 0h2m-247 1h2m-37 1h2m31 0h2m-4 1h2m-4 1h2m244 0h2m-250 1h2m-24 1h2m17 0h3m-5 1h2m247 0h2m-253 1h2m327 0h2m-342 1h2m7 0h2m248 0h2m79 0h2m-335 1h2m-6 1h4m-5 1h4m249 0h2m-257 1h2m4 0h2m-10 1h2m252 0h2m-258 1h2m11 0h2m239 0h2m-258 1h2m-4 1h2m18 0h2m233 0h2m-259 1h2m22 0h2m-29 1h3m254 0h2m-261 1h2m30 0h2m223 0h2m-261 1h2m34 0h2m219 0h2m-261 1h2m38 0h2m-44 1h2m256 0h2m-262 1h2m45 0h2m209 0h2m-263 1h3m49 0h2m205 0h2m-263 1h2m54 0h2m201 0h2m-263 1h2m58 0h2m197 0h2m-263 1h2m62 0h2m193 0h2m-290 1h2m25 0h2m66 0h2m189 0h2m-263 1h2m70 0h3m184 0h2m-264 1h3m75 0h2m179 0h3m-264 1h2m80 0h2m175 0h2m-263 1h2m84 0h3m170 0h2m98 0h2m-363 1h2m89 0h2m165 0h3m-263 1h2m93 0h3m160 0h2m-262 1h2m98 0h2m155 0h3m-263 1h3m102 0h3m149 0h3m-262 1h2m1 0h2m105 0h3m143 0h3m-261 1h2m113 0h3m137 0h3m-260 1h2m118 0h3m131 0h3m109 0h2m-370 1h2m123 0h3m125 0h3m-258 1h2m128 0h4m117 0h4m-258 1h3m17 0h2m115 0h4m110 0h3m-256 1h2m141 0h4m101 0h5m117 0h2m-374 1h2m147 0h4m93 0h4m-252 1h2m153 0h5m83 0h5m-250 1h2m31 0h2m127 0h6m71 0h6m-247 1h2m168 0h7m57 0h7m132 0h2m-377 1h2m177 0h9m39 0h9m-239 1h3m41 0h2m145 0h39m-232 1h2m374 0h2m-380 1h2m-4 1h2m52 0h2m321 0h2m-381 1h2m-4 1h2m59 0h2m-66 1h3m377 0h2m-384 1h2m67 0h2m-73 1h2m379 0h2m-385 1h2m74 0h2m-80 1h2m380 0h2m-386 1h2m81 0h2m383 0h2m-472 1h2m381 0h2m-297 1h2m291 0h2m-293 1h2m286 1h2m-287 1h2m281 0h2m-373 1h2m88 0h2m276 1h2m-277 1h2m271 0h2m-273 1h2m267 0h2m-269 1h2m263 0h2m-265 1h2m353 0h2m-355 1h2m256 0h2m-258 1h2m252 0h2m-254 1h2m248 0h2m-250 1h2m244 0h2m-246 1h2m240 0h2m-341 1h2m97 0h2m236 0h2m-238 1h2m231 0h3m97 0h2m-333 1h2m227 0h2m-229 1h2m223 0h2m-225 1h3m218 0h2m-324 1h2m102 0h2m213 0h3m-216 1h3m208 0h2m-210 1h2m203 0h3m104 0h2m-312 1h3m198 0h2m-309 1h2m107 0h2m193 0h3m-196 1h3m187 0h3m-190 1h3m181 0h3m110 0h2m-296 1h3m176 0h2m-293 1h2m113 0h3m169 0h4m-173 1h3m163 0h3m115 0h2m-283 1h3m157 0h3m-280 1h2m118 0h4m149 0h4m-153 1h4m142 0h3m121 0h2m-268 1h3m135 0h4m-266 1h2m125 0h5m126 0h4m125 0h2m-257 1h4m117 0h5m-255 1h2m131 0h5m107 0h5m-112 1h5m97 0h5m135 0h2m-379 1h2m138 0h6m85 0h6m-91 1h7m71 0h7m143 0h2m-373 1h2m148 0h9m53 0h9m-62 1h15m24 0h14m156 0h2m-367 1h2m169 0h24m167 1h2m-361 1h2m354 1h2m-355 1h2m349 0h2m-351 1h2m344 1h2m-345 1h2m339 0h2m-341 1h2m334 1h2m-471 1h4m132 0h2m329 0h2m132 0h4m-608 1h3m4 0h3m131 0h2m458 0h3m4 0h4m-614 1h2m10 0h2m131 0h2m322 0h2m130 0h2m-136 1h2m146 0h2m-469 1h2m315 0h2m-317 1h2m311 0h2m-313 1h2m307 0h2m-309 1h2m303 0h2m-305 1h2m299 0h2m-301 1h2m295 0h2m-297 1h2m291 0h2m-293 1h2m287 0h2m-289 1h2m283 0h2m-285 1h2m279 0h2m-281 1h2m275 0h2m-277 1h3m270 0h2m-272 1h2m265 0h3m-268 1h2m261 0h2m-263 1h3m256 0h2m-258 1h2m251 0h3m-254 1h2m247 0h2m-249 1h3m241 0h3m-433 1h2m14 0h2m171 0h3m236 0h2m-238 1h2m231 0h3m188 0h2m-615 1h3m6 0h3m179 0h3m225 0h3m179 0h3m7 0h2m-610 1h6m185 0h3m219 0h3m185 0h7m-414 1h3m214 0h2m-216 1h3m208 0h3m-211 1h3m201 0h4m-205 1h3m195 0h3m-198 1h3m189 0h3m-192 1h4m182 0h3m-185 1h3m175 0h4m-179 1h4m167 0h4m-171 1h4m159 0h4m-163 1h4m151 0h4m-155 1h5m142 0h4m-146 1h4m133 0h5m-138 1h6m122 0h5m-127 1h5m111 0h6m-117 1h6m99 0h6m-105 1h8m84 0h7m-91 1h8m67 0h9m-76 1h13m42 0h12m-54 1h42" transform="translate(0,.5)" stroke="#000" stroke-width="1" fill="none"/><path d="m417 644v38m1-51v13m0 38v13m1-73v9m0 64v10m1-90v7m0 83v7m1-103v6m0 97v6m1-115v6m0 109v6m1-126v5m0 121v5m1-136v5m0 131v5m1-145v4m0 141v4m1-154v5m0 149v5m1-163v4m0 159v4m1-170v3m0 167v3m1-177v4m0 173v4m1-184v3m0 181v3m1-191v4m0 187v4m1-198v3m0 195v3m1-204v3m0 201v3m1-210v3m0 207v3m1-216v3m0 213v3m1-413v6m0 185v3m0 219v3m0 185v6m1-610v3m0 6v2m0 180v3m0 225v2m0 181v2m0 6v3m1-614v1m0 11v2m0 176v2m0 230v3m0 176v2m0 11v1m1-617v2m0 14v1m0 172v3m0 235v3m0 172v1m0 14v2m1-620v1m0 17v1m0 169v2m0 241v2m0 169v1m1-584v1m0 165v3m0 245v3m0 165v1m1-419v2m0 251v2m0 183v1m1-442v3m0 255v3m1-263v2m0 261v2m1-267v2m0 265v2m1-271v2m0 269v2m1-276v3m0 273v3m1-281v2m0 279v2m1-285v2m0 283v2m1-289v2m0 287v2m1-293v2m0 291v2m1-297v2m0 295v2m1-301v2m0 299v2m1-305v2m0 303v2m1-465v1m0 155v2m0 307v2m0 155v1m1-603v1m0 133v2m0 311v2m0 133v1m1-584v1m0 132v2m0 315v2m0 132v1m1-602v2m0 14v1m0 132v1m0 319v1m0 132v1m0 14v2m1-617v1m0 11v2m0 131v2m0 321v2m0 131v2m0 11v1m1-614v3m0 5v3m0 131v2m0 325v2m0 131v3m0 5v3m1-610v5m0 132v2m0 329v2m0 132v5m1-471v1m0 333v1m1-337v2m0 335v2m1-341v2m0 339v2m1-344v1m0 343v1m1-347v2m0 345v2m1-351v2m0 349v2m1-354v1m0 353v1m1-357v2m0 355v2m1-360v1m0 359v1m1-363v2m0 172v17m0 172v2m1-366v1m0 157v17m0 17v17m0 157v1m1-369v2m0 149v9m0 51v9m0 149v2m1-372v1m0 144v7m0 69v7m0 144v1m1-375v2m0 139v6m0 83v6m0 139v2m1-378v1m0 135v6m0 95v6m0 135v1m1-381v2m0 131v5m0 107v5m0 131v2m1-384v1m0 129v4m0 117v4m0 129v1m1-387v2m0 126v4m0 125v4m0 126v1m1-389v1m0 124v4m0 133v4m0 123v2m1-392v1m0 121v4m0 141v4m0 121v1m1-395v2m0 119v3m0 149v3m0 119v2m1-398v1m0 117v4m0 155v4m0 117v1m1-400v1m0 115v3m0 163v3m0 115v1m1-403v2m0 113v3m0 169v3m0 113v2m1-406v1m0 112v3m0 175v3m0 112v1m1-408v1m0 110v3m0 181v3m0 110v1m1-410v1m0 108v3m0 187v3m0 108v1m1-413v2m0 107v2m0 193v2m0 107v2m1-416v1m0 106v3m0 197v3m0 106v1m1-418v1m0 105v2m0 203v2m0 105v1m1-420v1m0 103v3m0 207v3m0 103v1m1-423v2m0 102v2m0 213v2m0 102v2m1-426v1m0 101v3m0 217v2m0 102v1m1-428v1m0 100v2m0 222v3m0 100v1m1-430v1m0 99v2m0 227v2m0 99v1m1-432v1m0 98v2m0 231v2m0 98v1m1-435v2m0 97v2m0 235v2m0 97v1m1-437v1m0 97v2m0 239v2m0 96v2m1-440v1m0 96v2m0 243v2m0 96v1m1-442v1m0 95v2m0 247v2m0 95v1m1-444v1m0 94v2m0 251v2m0 94v1m1-446v1m0 93v2m0 255v2m0 93v1m1-448v1m0 92v2m0 259v2m0 92v1m1-450v1m0 91v2m0 263v2m0 91v1m1-452v1m0 90v2m0 267v2m0 90v1m1-454v1m0 89v2m0 271v1m0 90v1m1-457v2m0 89v1m0 274v2m0 89v1m1-459v1m0 89v2m0 277v2m0 88v2m1-462v1m0 88v2m0 281v2m0 88v1m1-464v1m0 88v1m0 285v1m0 88v1m1-466v1m0 87v2m0 287v2m0 87v1m1-468v1m0 86v2m0 291v2m0 86v1m1-470v1m0 86v1m0 295v1m1-385v1m0 1v2m0 82v2m0 297v2m0 85v1m1-474v1m0 4v2m0 79v1m0 301v1m0 85v1m1-476v1m0 7v3m0 74v2m0 303v2m0 84v1m1-478v1m0 11v2m0 71v1m0 307v1m0 84v1m1-480v1m0 14v2m0 67v2m0 309v2m1-380v2m0 64v1m0 313v1m1-379v2m0 60v2m0 315v2m0 81v1m1-484v1m0 22v2m0 57v1m0 319v1m0 81v1m1-486v1m0 25v3m0 52v2m0 321v1m0 81v1m1-488v1m0 29v2m0 49v1m0 324v2m0 80v1m1-490v1m0 32v2m0 46v1m0 327v1m0 80v1m1-492v1m0 35v2m0 42v2m0 147v35m0 147v2m0 79v1m1-494v1m0 38v2m0 39v1m0 139v10m0 35v10m0 139v1m0 79v1m1-496v1m0 41v2m0 36v1m0 133v7m0 55v7m0 133v1m0 79v1m1-498v1m0 44v3m0 31v2m0 128v6m0 69v6m0 128v2m0 78v1m1-500v1m0 48v2m0 28v1m0 125v5m0 81v5m0 125v1m0 78v1m1-450v2m0 25v1m0 121v5m0 91v5m0 121v1m1-370v2m0 22v1m0 118v4m0 101v4m0 118v1m1-426v1m0 56v2m0 18v2m0 115v4m0 109v4m0 115v2m0 76v1m1-506v1m0 59v2m0 15v1m0 114v3m0 117v3m0 114v1m0 76v1m1-508v1m0 62v2m0 12v1m0 111v4m0 123v4m0 111v1m0 76v1m1-510v1m0 65v3m0 8v1m0 109v3m0 131v3m0 109v1m0 76v1m1-442v2m0 5v1m0 107v3m0 137v3m0 107v1m1-364v2m0 2v1m0 105v3m0 143v3m0 105v2m1-439v1m0 74v1m0 104v3m0 149v3m0 104v1m0 74v1m1-516v1m0 74v1m0 2v2m0 99v2m0 155v2m0 103v1m0 74v1m1-518v1m0 74v1m0 5v2m0 94v3m0 159v3m0 101v1m0 74v1m1-520v1m0 74v1m0 8v3m0 89v2m0 165v2m0 100v1m1-372v1m0 12v2m0 84v3m0 169v3m0 98v1m1-374v1m0 15v2m0 80v2m0 175v2m0 97v1m0 73v1m1-524v1m0 73v1m0 18v2m0 76v2m0 179v2m0 96v1m0 73v1m1-526v1m0 72v2m0 21v2m0 72v2m0 183v2m0 95v1m0 73v1m1-455v1m0 25v2m0 67v3m0 187v3m0 93v2m1-384v1m0 28v3m0 62v2m0 193v2m0 93v1m1-458v1m0 71v1m0 32v2m0 58v2m0 197v2m0 92v1m0 71v1m1-532v1m0 71v1m0 35v2m0 54v2m0 201v2m0 91v1m0 71v1m1-462v1m0 38v2m0 50v2m0 205v2m0 90v1m1-392v1m0 41v2m0 47v1m0 209v1m0 90v1m1-465v1m0 70v1m0 44v2m0 43v2m0 211v2m0 89v1m0 70v1m1-538v1m0 70v1m0 47v3m0 38v2m0 215v2m0 88v1m0 70v1m1-469v1m0 51v2m0 34v2m0 219v2m0 87v1m1-400v1m0 54v2m0 30v2m0 223v2m0 86v1m1-472v1m0 69v1m0 57v2m0 27v1m0 227v1m0 86v1m0 69v1m1-474v1m0 60v2m0 23v2m0 229v2m1-256v2m0 19v2m0 233v1m1-391v1m0 135v3m0 15v1m0 236v2m0 83v1m0 69v1m1-478v1m0 69v2m0 11v2m0 239v2m0 82v1m1-410v1m0 72v2m0 8v1m0 243v1m0 82v1m1-481v1m0 68v1m0 75v2m0 4v2m0 245v2m0 81v1m0 68v1m1-552v1m0 68v1m0 78v1m0 252v1m0 81v1m1-416v1m0 81v1m0 251v2m0 80v1m1-418v1m0 80v1m0 3v2m0 250v1m0 80v1m0 67v1m1-488v1m0 79v2m0 6v3m0 248v1m1-261v1m0 11v2m0 247v2m1-411v1m0 146v1m0 14v2m0 247v1m0 146v1m1-492v1m0 77v2m0 17v2m0 246v2m0 77v1m1-426v1m0 77v1m0 21v2m0 246v1m0 77v1m1-495v1m0 66v1m0 77v1m0 24v2m0 245v1m0 77v1m0 66v1m1-497v1m0 76v2m0 27v3m0 243v1m0 77v1m1-355v1m0 32v2m0 242v2m1-423v1m0 142v1m0 35v2m0 242v1m1-358v1m0 75v1m0 38v2m0 241v1m0 75v1m1-436v1m0 75v1m0 41v2m0 240v1m0 75v1m0 65v1m1-504v1m0 74v2m0 44v2m0 239v2m0 74v1m1-365v1m0 48v3m0 238v1m1-432v1m0 139v1m0 52v2m0 81v21m0 135v1m1-368v1m0 73v1m0 55v2m0 68v11m0 21v10m0 126v1m0 73v1m1-444v1m0 73v1m0 58v2m0 60v6m0 42v7m0 120v1m0 73v1m0 64v1m1-437v1m0 61v2m0 52v6m0 55v6m0 115v1m1-300v1m0 64v2m0 46v4m0 67v4m0 112v1m1-375v1m0 71v2m0 67v3m0 38v5m0 75v4m0 109v2m0 71v1m1-450v1m0 71v1m0 72v2m0 33v3m0 84v4m0 107v1m0 71v1m1-516v1m0 135v1m0 75v2m0 27v4m0 91v4m0 104v1m1-310v1m0 78v2m0 22v3m0 99v3m0 102v1m1-383v1m0 70v1m0 81v2m0 17v3m0 105v3m0 100v1m0 70v1m0 63v1m1-449v1m0 84v2m0 12v3m0 111v3m0 98v1m1-316v1m0 87v3m0 7v2m0 117v2m0 97v1m1-388v1m0 69v1m0 91v2m0 2v3m0 121v3m0 95v1m0 69v1m1-390v1m0 94v2m0 127v2m0 94v1m1-322v1m0 92v3m0 2v2m0 127v3m0 92v1m1-393v1m0 68v1m0 91v2m0 7v2m0 128v2m0 91v1m0 68v1m1-395v1m0 90v2m0 11v2m0 128v2m0 90v1m1-238v2m0 15v2m0 128v2m1-308v1m0 156v2m0 19v3m0 127v2m0 156v1m1-399v1m0 86v2m0 24v2m0 127v2m0 86v1m1-332v1m0 85v2m0 28v2m0 127v2m0 85v1m1-402v1m0 67v1m0 84v2m0 32v2m0 127v2m0 84v1m0 67v1m1-404v1m0 84v1m0 36v2m0 127v1m0 84v1m1-338v1m0 83v2m0 39v2m0 126v2m0 83v1m1-340v1m0 82v2m0 43v3m0 125v2m0 82v1m1-342v1m0 82v1m0 48v2m0 125v1m1-327v1m0 147v2m0 51v2m0 124v2m0 147v1m1-331v2m0 55v2m0 124v2m0 79v1m1-346v1m0 79v1m0 59v2m0 124v1m0 79v1m1-348v1m0 78v2m0 62v2m0 123v2m0 78v1m1-350v1m0 78v1m0 66v3m0 122v1m1-338v1m0 142v2m0 70v2m0 121v1m0 143v1m1-341v1m0 74v2m0 120v2m0 76v1m1-354v1m0 76v1m0 77v2m0 120v1m0 76v1m1-356v1m0 75v2m0 80v2m0 119v2m0 75v1m1-282v1m0 84v2m0 119v1m1-208v1m0 87v3m0 117v1m1-285v1m0 74v1m0 91v2m0 116v1m0 74v1m1-362v1m0 73v2m0 94v2m0 115v2m0 73v1m1-290v1m0 98v2m0 115v1m1-218v1m0 101v2m0 114v1m1-293v1m0 72v1m0 104v2m0 113v1m0 72v1m1-431v1m0 135v1m0 107v3m0 111v1m1-224v1m0 111v2m0 110v1m1-298v1m0 70v2m0 114v2m0 109v2m1-230v1m0 118v2m0 109v1m1-232v1m0 121v2m0 108v1m1-304v1m0 69v1m0 124v2m0 107v1m0 69v1m1-306v1m0 127v2m0 106v1m1-238v1m0 130v3m0 104v1m1-309v1m0 68v1m0 134v2m0 103v1m0 68v1m1-311v1m0 137v2m0 102v1m1-244v1m0 140v2m0 101v1m1-246v1m0 143v2m0 100v1m1-248v1m0 146v2m0 99v1m1-317v1m0 66v1m0 110v29m0 10v3m0 164v1m1-213v6m0 29v6m0 7v2m1-55v5m0 41v5m0 4v2m0 94v1m1-254v1m0 97v4m0 51v4m0 97v1m1-256v1m0 94v4m0 59v2m0 96v1m1-258v1m0 92v3m0 69v1m0 92v1m1-260v1m0 90v3m0 74v2m0 90v1m1-327v1m0 154v2m0 80v1m0 154v1m1-241v3m0 84v2m1-177v1m0 85v2m0 89v2m0 85v1m1-266v1m0 84v2m0 93v2m0 84v1m1-268v1m0 83v2m0 97v2m0 83v1m1-187v2m0 101v2m1-107v2m0 105v2m1-191v1m0 79v2m0 109v2m0 79v1m1-274v1m0 78v2m0 113v2m0 78v1m1-197v1m0 117v1m1-121v2m0 119v2m1-201v1m0 75v2m0 123v1m0 76v1m1-204v1m0 126v2m1-130v1m0 129v1m1-207v1m0 73v2m0 131v2m0 73v1m1-210v1m0 135v1m1-139v2m0 137v1m1-213v1m0 71v1m0 140v2m1-144v1m0 143v1m1-146v1m0 145v1m0 70v1m1-219v1m0 147v1m1-151v2m0 149v2m1-223v1m0 68v1m0 153v1m1-156v1m0 155v1m1-158v1m0 157v1m0 67v1m1-228v1m0 159v1m1-162v1m0 161v1m1-164v1m0 163v1m1-166v1m0 165v1m1-168v1m0 167v1m1-170v1m0 169v1m3-173v1m0 173v1m1-176v1m0 175v1m1-178v1m0 177v1m1-180v1m0 179v1m3-183v1m0 183v1m1-186v1m2 186v1m1-190v1m0 189v1m3-193v1m2 194v1m7-201v1m108 1v1m0 199v1m5-198v1m0 193v1m3-193v1m0 189v1m3-189v1m0 185v1m3-185v1m0 181v1m1-182v1m0 179v1m1-180v1m0 177v1m3-177v1m0 173v1m1-174v1m0 171v1m1-172v1m0 169v1m1-236v1m0 65v1m0 167v1m1-168v1m0 165v1m1-166v1m0 163v1m1-164v1m0 161v1m1-162v1m0 159v1m1-160v1m0 157v1m1-158v1m0 155v1m1-156v1m0 153v1m1-154v1m0 151v1m1-222v1m0 69v1m0 149v1m0 69v1m1-220v2m0 145v2m1-147v1m0 143v1m1-216v1m0 71v1m0 141v1m0 71v1m1-214v1m0 139v1m1-140v2m0 135v2m1-137v1m0 133v1m0 73v1m1-208v1m0 130v2m1-207v1m0 74v2m0 127v1m1-204v1m0 75v2m0 123v2m0 75v1m1-201v1m0 121v1m1-122v2m0 117v2m1-198v1m0 78v1m0 115v1m0 78v1m1-195v2m0 111v2m1-113v2m0 107v2m1-191v1m0 81v2m0 103v2m0 81v1m1-270v1m0 82v2m0 99v2m0 82v1m1-184v2m0 95v2m0 83v1m1-181v2m0 90v3m1-180v1m0 86v3m0 85v2m1-176v1m0 88v2m0 80v3m0 88v1m1-262v1m0 89v2m0 76v2m0 90v1m1-260v1m0 91v1m0 71v3m0 91v1m0 65v1m1-228v2m0 61v4m0 93v1m1-323v1m0 163v4m0 53v4m1-158v1m0 94v2m0 4v4m0 45v4m1-153v1m0 95v3m0 5v6m0 33v6m0 103v1m1-252v1m0 97v2m0 9v10m0 13v10m0 108v1m1-250v1m0 98v2m0 17v13m0 117v1m1-316v1m0 67v1m0 99v2m0 144v1m0 67v1m1-314v1m0 100v2m0 141v1m1-244v1m0 101v2m0 138v1m1-242v1m0 102v3m0 134v1m0 68v1m1-309v1m0 104v2m0 131v1m1-308v1m0 69v1m0 105v2m0 128v1m1-236v1m0 106v2m0 125v1m1-234v1m0 107v2m0 122v1m1-303v1m0 70v1m0 108v2m0 119v1m0 70v1m1-301v1m0 109v3m0 115v1m1-228v1m0 111v2m0 112v1m1-226v1m0 112v2m0 109v1m0 71v1m1-296v2m0 112v2m0 105v2m0 71v1m1-293v1m0 113v2m0 102v1m1-292v1m0 73v1m0 114v2m0 99v1m1-290v1m0 73v1m0 115v3m0 95v1m0 73v1m0 63v1m1-352v1m0 117v2m0 92v1m1-351v1m0 138v2m0 117v2m0 88v2m1-285v1m0 75v1m0 118v2m0 85v1m0 75v1m1-358v1m0 75v1m0 119v2m0 82v1m0 75v1m1-280v2m0 119v2m0 78v2m1-201v1m0 120v3m0 74v1m1-276v1m0 77v1m0 122v2m0 70v2m0 77v1m1-352v1m0 77v2m0 122v2m0 67v1m0 78v1m1-416v1m0 65v1m0 78v1m0 123v2m0 64v1m0 78v1m0 65v1m1-335v2m0 123v2m0 60v2m1-187v1m0 124v2m0 57v1m1-265v1m0 80v2m0 124v2m0 53v2m0 80v1m1-344v1m0 81v2m0 124v3m0 48v2m0 81v1m1-409v1m0 66v1m0 82v1m0 126v2m0 45v1m0 82v1m0 66v1m1-407v1m0 82v2m0 126v2m0 41v2m0 82v1m1-338v1m0 83v2m0 126v2m0 37v2m0 83v1m1-251v2m0 126v2m0 33v2m1-163v1m0 127v2m0 30v1m1-315v1m0 67v1m0 86v2m0 127v3m0 25v2m0 86v1m0 67v1m1-531v1m0 130v1m0 87v2m0 128v2m0 21v2m0 87v1m1-330v1m0 88v2m0 128v2m0 17v2m0 88v1m1-397v1m0 68v1m0 89v3m0 127v2m0 12v3m0 89v1m0 68v1m1-395v1m0 91v2m0 127v2m0 8v2m0 91v1m1-324v1m0 92v2m0 127v2m0 4v2m0 92v1m1-392v1m0 69v1m0 93v2m0 129v1m0 94v1m0 69v1m1-390v1m0 94v3m0 123v1m0 4v1m0 91v1m1-318v1m0 96v3m0 117v3m0 6v2m0 88v1m1-387v1m0 70v1m0 98v2m0 113v2m0 11v2m0 85v1m0 70v1m1-385v1m0 99v3m0 107v3m0 15v2m0 82v1m0 70v1m1-383v1m0 101v3m0 101v3m0 20v2m0 79v1m1-382v1m0 71v1m0 103v4m0 93v4m0 25v3m0 75v1m1-380v1m0 71v1m0 106v3m0 87v3m0 32v2m0 72v1m0 71v1m1-515v1m0 136v1m0 108v4m0 79v4m0 37v2m0 69v1m0 136v1m1-441v1m0 111v5m0 69v5m0 43v2m0 66v1m1-375v1m0 72v1m0 115v5m0 59v5m0 50v2m0 63v1m0 72v1m1-446v1m0 72v2m0 118v6m0 47v6m0 57v2m0 59v2m0 72v1m1-370v1m0 123v9m0 29v9m0 65v3m0 55v1m1-294v1m0 131v29m0 77v2m0 52v1m0 139v1m1-507v1m0 74v1m0 238v2m0 49v1m0 74v1m1-506v1m0 65v1m0 74v1m0 239v2m0 46v1m0 74v1m1-438v1m0 74v1m0 240v2m0 43v1m0 74v1m1-361v2m0 240v2m0 39v2m1-426v1m0 142v1m0 241v2m0 36v1m0 142v1m1-500v1m0 76v1m0 242v3m0 32v1m0 76v1m1-432v1m0 76v1m0 244v2m0 29v1m0 76v1m1-430v1m0 76v2m0 244v2m0 25v2m0 76v1m1-350v1m0 245v2m0 22v1m1-416v1m0 145v1m0 246v2m0 19v1m0 145v1m1-493v1m0 78v2m0 246v2m0 15v2m0 78v1m1-424v1m0 79v1m0 247v3m0 11v1m0 79v1m1-490v1m0 147v1m0 249v2m0 8v1m0 79v1m0 67v1m1-488v1m0 79v2m0 249v2m0 4v2m0 79v1m1-418v1m0 80v1m0 250v1m0 83v1m1-485v1m0 68v1m0 80v2m0 250v1m0 80v1m0 68v1m1-401v1m0 247v1m0 3v2m1-253v2m0 243v2m0 6v3m1-407v1m0 68v1m0 83v1m0 241v1m0 11v2m0 70v1m0 68v1m1-479v1m0 83v2m0 237v2m0 14v2m0 67v1m1-408v1m0 84v2m0 233v2m0 18v2m0 64v1m1-476v1m0 69v1m0 85v1m0 231v1m0 22v2m0 61v1m0 69v1m1-474v1m0 85v2m0 227v2m0 25v2m0 58v1m0 69v1m1-472v1m0 86v2m0 223v2m0 29v3m0 54v1m1-471v1m0 70v1m0 87v1m0 221v1m0 34v2m0 51v1m1-469v1m0 70v1m0 87v2m0 217v2m0 37v2m0 48v1m0 70v1m1-467v1m0 88v2m0 213v2m0 41v2m0 45v1m1-394v1m0 89v2m0 209v2m0 45v2m0 42v1m1-464v1m0 71v1m0 90v2m0 205v2m0 49v2m0 39v1m0 71v1m1-534v1m0 71v1m0 91v2m0 201v2m0 53v3m0 35v1m0 71v1m1-460v1m0 92v2m0 197v2m0 58v2m0 32v1m1-386v1m0 93v2m0 193v2m0 62v2m0 29v1m1-457v1m0 72v1m0 94v2m0 189v2m0 66v2m0 26v1m0 72v1m1-528v1m0 72v1m0 95v2m0 185v2m0 70v2m0 23v1m0 72v1m1-453v1m0 96v2m0 181v2m0 74v2m0 20v1m1-378v1m0 97v3m0 175v3m0 78v2m0 17v1m1-450v1m0 73v1m0 99v2m0 171v2m0 83v3m0 12v2m0 73v1m1-522v1m0 73v2m0 99v2m0 167v2m0 88v2m0 9v1m0 74v1m1-520v1m0 74v1m0 100v3m0 161v3m0 92v2m0 6v1m0 74v1m1-443v1m0 102v3m0 155v3m0 97v2m0 3v1m1-366v1m0 104v2m0 151v2m0 102v1m1-438v1m0 75v1m0 105v3m0 145v3m0 107v1m0 73v1m1-514v1m0 75v1m0 107v3m0 139v3m0 107v1m0 3v3m0 69v1m1-512v1m0 75v2m0 108v3m0 133v3m0 108v2m0 7v2m0 66v1m1-510v1m0 76v1m0 110v4m0 125v4m0 110v1m0 11v2m0 63v1m1-431v1m0 113v3m0 119v3m0 113v1m0 14v2m0 60v1m1-429v1m0 115v4m0 111v4m0 115v1m0 17v2m1-447v1m0 77v1m0 118v4m0 103v4m0 117v2m0 20v2m1-448v1m0 77v2m0 120v4m0 95v4m0 120v1m0 24v3m0 51v1m1-502v1m0 78v1m0 123v5m0 85v5m0 123v1m0 28v2m0 48v1m1-500v1m0 78v1m0 127v6m0 73v6m0 127v1m0 31v2m0 45v1m1-498v1m0 78v2m0 131v6m0 61v6m0 131v2m0 34v2m0 42v1m1-496v1m0 79v1m0 136v9m0 43v9m0 136v1m0 38v2m0 39v1m1-494v1m0 79v1m0 144v18m0 7v18m0 144v1m0 41v2m0 36v1m1-412v2m0 160v7m0 160v2m0 44v3m1-376v1m0 325v1m0 49v2m1-459v1m0 81v1m0 323v1m0 52v2m0 27v1m1-488v1m0 81v2m0 319v2m0 55v2m0 24v1m1-486v1m0 82v1m0 317v1m0 59v2m0 21v1m1-484v1m0 82v2m0 313v2m0 62v2m0 18v1m1-482v1m0 83v1m0 311v1m0 66v3m0 14v1m1-480v1m0 83v2m0 307v2m0 70v2m0 11v1m1-478v1m0 84v1m0 305v1m0 74v2m0 8v1m1-476v1m0 84v2m0 301v2m0 77v2m0 5v1m1-474v1m0 85v1m0 299v1m0 81v2m0 2v1m1-472v1m0 85v2m0 295v2m0 85v1m1-470v1m0 86v1m0 292v2m1-381v1m0 86v2m0 289v1m0 87v1m1-466v1m0 87v2m0 285v2m0 87v1m1-464v1m0 88v1m0 282v2m0 88v1m1-462v1m0 88v2m0 279v1m0 89v1m1-460v1m0 89v2m0 275v2m0 89v1m1-458v1m0 90v2m0 271v2m0 90v1m1-456v1m0 91v1m0 268v2m0 91v1m1-454v1m0 91v2m0 265v1m0 92v1m1-452v1m0 92v2m0 261v2m0 91v2m1-450v2m0 92v2m0 257v2m0 92v1m1-446v1m0 93v2m0 253v2m0 93v1m1-444v1m0 94v2m0 249v2m0 94v1m1-442v1m0 95v2m0 245v2m0 95v1m1-440v1m0 96v2m0 241v2m0 96v1m1-438v1m0 97v2m0 237v2m0 97v1m1-436v1m0 98v2m0 233v2m0 98v1m1-434v2m0 98v3m0 227v3m0 98v2m1-431v1m0 100v2m0 223v2m0 100v1m1-428v1m0 101v2m0 219v2m0 101v1m1-426v1m0 102v2m0 214v3m0 102v1m1-424v1m0 103v3m0 209v2m0 104v1m1-422v2m0 104v2m0 205v2m0 104v2m1-419v1m0 105v3m0 199v3m0 105v1m1-416v1m0 107v3m0 193v3m0 107v1m1-414v1m0 109v2m0 189v2m0 109v1m1-412v2m0 109v3m0 183v3m0 109v2m1-409v1m0 111v3m0 177v3m0 111v1m1-406v1m0 113v3m0 171v3m0 113v1m1-404v2m0 114v3m0 165v3m0 114v2m1-401v1m0 116v4m0 157v4m0 116v1m1-398v1m0 119v3m0 151v3m0 119v1m1-396v2m0 120v4m0 143v4m0 120v2m1-393v1m0 123v3m0 136v4m0 123v1m1-390v1m0 125v5m0 127v4m0 126v1m1-388v2m0 128v4m0 119v4m0 128v2m1-385v1m0 131v5m0 109v5m0 131v1m1-382v2m0 134v5m0 99v5m0 134v2m1-379v1m0 138v6m0 87v6m0 138v1m1-376v2m0 142v7m0 73v7m0 142v2m1-373v1m0 148v8m0 57v8m0 148v1m1-370v2m0 154v13m0 31v13m0 154v2m1-367v1m0 166v31m0 166v1m1-364v2m0 359v2m1-361v1m0 357v1m1-358v2m0 353v2m1-355v1m0 351v1m1-352v2m0 347v2m1-349v2m0 343v2m1-345v1m0 341v1m1-342v2m0 337v2m1-339v2m0 333v2m1-335v2m0 329v2m1-472v10m0 131v1m0 327v1m0 131v10m1-613v2m0 10v1m0 131v2m0 323v2m0 131v1m0 10v2m1-616v1m0 13v2m0 131v2m0 319v2m0 131v2m0 13v1m1-618v1m0 16v1m0 132v2m0 315v2m0 132v1m0 16v1m1-620v1m0 18v1m0 133v2m0 311v2m0 133v1m0 18v1m1-622v1m0 155v1m0 308v2m0 155v1m1-466v2m0 305v1m1-306v2m0 301v2m1-303v2m0 297v2m1-299v2m0 293v2m1-295v2m0 289v2m1-291v3m0 283v3m1-286v2m0 279v2m1-281v2m0 275v2m1-277v2m0 271v2m1-273v2m0 267v2m1-269v3m0 261v3m1-264v2m0 257v2m1-259v2m0 253v2m0 161v1m1-417v3m0 247v3m1-437v1m0 186v2m0 243v2m0 186v1m1-620v1m0 15v2m0 170v3m0 237v3m0 170v2m0 15v1m1-618v2m0 12v1m0 175v3m0 231v3m0 175v1m0 12v2m1-615v2m0 8v2m0 179v2m0 227v2m0 179v2m0 8v2m1-611v8m0 183v3m0 221v3m0 183v8m1-415v3m0 215v3m1-218v3m0 209v3m1-212v3m0 203v3m1-206v3m0 197v3m1-200v4m0 189v4m1-193v3m0 183v3m1-186v4m0 175v4m1-179v3m0 169v3m1-172v4m0 161v4m1-165v4m0 153v4m1-157v5m0 143v5m1-148v4m0 135v4m1-139v5m0 125v5m1-130v6m0 113v6m1-119v6m0 101v6m1-107v7m0 87v7m1-94v8m0 71v8m1-79v12m0 47v12m1-59v47" transform="translate(.5,0)" stroke="#000" stroke-width="1" fill="none"/>
<g stroke="#a01c1c" stroke-width="1" fill="none"><circle cx="749.5" cy="663.5" r="5"/><path d="M744.5 663.5H754.5M749.5 658.5V668.5"/></g>
<path d="M257.0 1135.5H298.0M277.5 1115.0V1156.0" stroke="#ff0000" stroke-width="1" fill="none"/>
</g>
<g shape-rendering="auto" transform="translate(1194.1,1005.6)" style="filter:drop-shadow(0.8px 1px 0.9px rgba(0,0,0,.5))"><path d="M0 0V18.3L4.3 14.7L7.4 21.3C7.8 22 8.6 22.1 9.2 21.8C9.9 21.5 10.2 20.8 9.9 20.1L6.9 13H12.3Z" fill="#0c0c0c" stroke="#fff" stroke-width="1.5" stroke-linejoin="round" paint-order="stroke"/></g>
</svg>
<div style="left:1389px;top:64px;width:285px;height:1286px;background:#efefef;"></div>
<div style="left:1646px;top:67px;width:11px;height:11px;border:1px solid #6a6a6a;border-radius:3px;background:#f2f2f2;"></div>
<div style="left:1660px;top:67px;width:11px;height:11px;border:1px solid #6a6a6a;border-radius:3px;background:#f2f2f2;"></div>
<svg style="left:1646px;top:67px" width="11" height="11" viewBox="0 0 11 11" ><rect x="4.4" y="2.4" width="4.2" height="4.2" rx="1" fill="none" stroke="#5e5e5e" stroke-width="1"/><rect x="2.4" y="4.4" width="4.2" height="4.2" rx="1" fill="#f4f4f4" stroke="#5e5e5e" stroke-width="1"/></svg>
<svg style="left:1660px;top:67px" width="11" height="11" viewBox="0 0 11 11" ><path d="M3 3L8 8M8 3L3 8" stroke="#5a5a5a" stroke-width="1.9" stroke-linecap="square" stroke-dasharray="1.4 0.5"/></svg>
<div class="pbtn" style="left:1394px;top:82px;width:35px;height:23px;"></div>
<div class="pbtn" style="left:1429px;top:82px;width:35px;height:23px;"></div>
<div class="pbtn" style="left:1464px;top:82px;width:35px;height:23px;"></div>
<div class="pbtn" style="left:1499px;top:82px;width:34px;height:23px;"></div>
<div class="pbtn" style="left:1533px;top:82px;width:35px;height:23px;"></div>
<div class="pbtn" style="left:1568px;top:82px;width:35px;height:23px;"></div>
<div class="pbtn" style="left:1603px;top:82px;width:35px;height:23px;"></div>
<div class="pbtn" style="left:1638px;top:82px;width:35px;height:23px;"></div>
<svg style="left:1403.5px;top:87px" width="15" height="12" viewBox="0 0 15 12" ><path d="M0.1 5.9C0.9 3 3.6 0.1 7.5 0.1C11.2 0.1 13.8 2.4 14.9 5.7C13.8 9.2 11.2 11.1 7.5 11.1C3.9 11.1 1.2 9.2 0.1 5.9Z" fill="#000"/><path d="M2.5 4.7C2.6 7.3 4.7 9.3 7.4 9.3C10.1 9.3 12.2 7.3 12.4 4.7L10.8 4.1C10.7 6.1 9.4 7.7 7.4 7.7C5.5 7.7 4.2 6.1 4.1 4.1Z" fill="#fff"/><path d="M5.9 3.6C6.4 3.1 7 3.1 7.5 3.5C6.9 3.6 6.6 4 6.5 4.6Z" fill="#fff" opacity=".55"/></svg>
<svg style="left:1438.5px;top:87px" width="15" height="12" viewBox="0 0 15 12" ><path d="M0.1 5.9C0.9 3 3.6 0.1 7.5 0.1C11.2 0.1 13.8 2.4 14.9 5.7C13.8 9.2 11.2 11.1 7.5 11.1C3.9 11.1 1.2 9.2 0.1 5.9Z" fill="#a9a9a9"/><path d="M2.5 4.7C2.6 7.3 4.7 9.3 7.4 9.3C10.1 9.3 12.2 7.3 12.4 4.7L10.8 4.1C10.7 6.1 9.4 7.7 7.4 7.7C5.5 7.7 4.2 6.1 4.1 4.1Z" fill="#ececec"/><path d="M5.9 3.6C6.4 3.1 7 3.1 7.5 3.5C6.9 3.6 6.6 4 6.5 4.6Z" fill="#ececec" opacity=".55"/></svg>
<svg style="left:1474.5px;top:86.5px" width="13" height="13" viewBox="0 0 13 13" ><path d="M4.8 0.6H8.2V4.8H12.4V8.2H8.2V12.4H4.8V8.2H0.6V4.8H4.8Z" fill="#f00" stroke="#b00000" stroke-width="0.8"/></svg>
<svg style="left:1509.5px;top:91px" width="13" height="5" viewBox="0 0 13 5" ><rect x="0.5" y="0.7" width="12" height="3.4" rx="0.8" fill="#a0a0a0" stroke="#8c8c8c" stroke-width="0.6"/></svg>
<div style="left:1550.6px;top:87.5px;width:1px;height:12px;background:#9a9a9a;"></div>
<svg style="left:1578px;top:87px" width="15" height="15" viewBox="0 0 15 15" ><path d="M0.3 14.6L1.6 10.8L11.2 1.2C11.9 0.5 13 0.5 13.7 1.2C14.4 1.9 14.4 3 13.7 3.7L4.1 13.3Z" fill="#e3a046"/><path d="M1.6 10.8L11.2 1.2L12.2 2.2L2.6 11.8Z" fill="#f3c26c"/><path d="M3.2 12.4L12.8 2.8L13.7 3.7L4.1 13.3Z" fill="#b87a2a"/><path d="M10 2.4L11.2 1.2C11.9 0.5 13 0.5 13.7 1.2C14.4 1.9 14.4 3 13.7 3.7L12.5 4.9Z" fill="#e0262a"/><path d="M0.3 14.6L0.9 12.8L2.1 14Z" fill="#5a4630"/></svg>
<svg style="left:1613px;top:86px" width="14" height="15" viewBox="0 0 14 15" ><rect x="1" y="0.7" width="11.5" height="13.3" rx="1" fill="#f4f4f4" stroke="#e4e4e4" stroke-width=".8"/><path d="M3.4 2.6H6.2C7.9 2.6 8.7 3.6 8.7 5.2V9.6" fill="none" stroke="#a3a3a3" stroke-width="2"/><path d="M5.1 9.2H12.3L8.7 13.4Z" fill="#a3a3a3"/><path d="M10.2 4V9" stroke="#d9d9d9" stroke-width="1"/></svg>
<svg style="left:1649.5px;top:87.3px" width="11" height="11" viewBox="0 0 11 11" ><rect x="0.9" y="0.9" width="9" height="9" rx="0.7" fill="#ea8a5c" stroke="#e2402c" stroke-width="1"/><path d="M3 3L7.8 7.8M7.8 3L3 7.8" stroke="#fff" stroke-width="1.4"/></svg>
<div class="list" style="left:1394px;top:105px;width:279px;height:299px;"></div>
<svg style="left:1398.5px;top:109px" width="15" height="12" viewBox="0 0 15 12" ><path d="M0.1 5.9C0.9 3 3.6 0.1 7.5 0.1C11.2 0.1 13.8 2.4 14.9 5.7C13.8 9.2 11.2 11.1 7.5 11.1C3.9 11.1 1.2 9.2 0.1 5.9Z" fill="#000"/><path d="M2.5 4.7C2.6 7.3 4.7 9.3 7.4 9.3C10.1 9.3 12.2 7.3 12.4 4.7L10.8 4.1C10.7 6.1 9.4 7.7 7.4 7.7C5.5 7.7 4.2 6.1 4.1 4.1Z" fill="#fff"/><path d="M5.9 3.6C6.4 3.1 7 3.1 7.5 3.5C6.9 3.6 6.6 4 6.5 4.6Z" fill="#fff" opacity=".55"/></svg>
<svg style="left:1398.5px;top:127px" width="15" height="12" viewBox="0 0 15 12" ><path d="M0.1 5.9C0.9 3 3.6 0.1 7.5 0.1C11.2 0.1 13.8 2.4 14.9 5.7C13.8 9.2 11.2 11.1 7.5 11.1C3.9 11.1 1.2 9.2 0.1 5.9Z" fill="#000"/><path d="M2.5 4.7C2.6 7.3 4.7 9.3 7.4 9.3C10.1 9.3 12.2 7.3 12.4 4.7L10.8 4.1C10.7 6.1 9.4 7.7 7.4 7.7C5.5 7.7 4.2 6.1 4.1 4.1Z" fill="#fff"/><path d="M5.9 3.6C6.4 3.1 7 3.1 7.5 3.5C6.9 3.6 6.6 4 6.5 4.6Z" fill="#fff" opacity=".55"/></svg>
<svg style="left:1398.5px;top:145px" width="15" height="12" viewBox="0 0 15 12" ><path d="M0.1 5.9C0.9 3 3.6 0.1 7.5 0.1C11.2 0.1 13.8 2.4 14.9 5.7C13.8 9.2 11.2 11.1 7.5 11.1C3.9 11.1 1.2 9.2 0.1 5.9Z" fill="#000"/><path d="M2.5 4.7C2.6 7.3 4.7 9.3 7.4 9.3C10.1 9.3 12.2 7.3 12.4 4.7L10.8 4.1C10.7 6.1 9.4 7.7 7.4 7.7C5.5 7.7 4.2 6.1 4.1 4.1Z" fill="#fff"/><path d="M5.9 3.6C6.4 3.1 7 3.1 7.5 3.5C6.9 3.6 6.6 4 6.5 4.6Z" fill="#fff" opacity=".55"/></svg>
<svg style="left:1421px;top:107.5px" width="15" height="15" viewBox="0 0 15 15" ><path d="M0.3 14.6L1.6 10.8L11.2 1.2C11.9 0.5 13 0.5 13.7 1.2C14.4 1.9 14.4 3 13.7 3.7L4.1 13.3Z" fill="#e3a046"/><path d="M1.6 10.8L11.2 1.2L12.2 2.2L2.6 11.8Z" fill="#f3c26c"/><path d="M3.2 12.4L12.8 2.8L13.7 3.7L4.1 13.3Z" fill="#b87a2a"/><path d="M10 2.4L11.2 1.2C11.9 0.5 13 0.5 13.7 1.2C14.4 1.9 14.4 3 13.7 3.7L12.5 4.9Z" fill="#e0262a"/><path d="M0.3 14.6L0.9 12.8L2.1 14Z" fill="#5a4630"/></svg>
<div style="left:1527px;top:406px;width:18px;height:1px;"><div style="left:0px;top:0;width:1px;height:1px;background:#bcbcbc;"></div><div style="left:3px;top:0;width:1px;height:1px;background:#bcbcbc;"></div><div style="left:6px;top:0;width:1px;height:1px;background:#bcbcbc;"></div><div style="left:9px;top:0;width:1px;height:1px;background:#bcbcbc;"></div><div style="left:12px;top:0;width:1px;height:1px;background:#bcbcbc;"></div><div style="left:15px;top:0;width:1px;height:1px;background:#bcbcbc;"></div></div>
<div style="left:1646px;top:414px;width:11px;height:11px;border:1px solid #6a6a6a;border-radius:3px;background:#f2f2f2;"></div>
<div style="left:1660px;top:414px;width:11px;height:11px;border:1px solid #6a6a6a;border-radius:3px;background:#f2f2f2;"></div>
<svg style="left:1646px;top:414px" width="11" height="11" viewBox="0 0 11 11" ><rect x="4.4" y="2.4" width="4.2" height="4.2" rx="1" fill="none" stroke="#5e5e5e" stroke-width="1"/><rect x="2.4" y="4.4" width="4.2" height="4.2" rx="1" fill="#f4f4f4" stroke="#5e5e5e" stroke-width="1"/></svg>
<svg style="left:1660px;top:414px" width="11" height="11" viewBox="0 0 11 11" ><path d="M3 3L8 8M8 3L3 8" stroke="#5a5a5a" stroke-width="1.9" stroke-linecap="square" stroke-dasharray="1.4 0.5"/></svg>
<div class="pbtn" style="left:1394px;top:429px;width:56px;height:23px;"></div>
<div class="pbtn" style="left:1450px;top:429px;width:56px;height:23px;"></div>
<div class="pbtn" style="left:1506px;top:429px;width:55px;height:23px;"></div>
<div class="pbtn" style="left:1561px;top:429px;width:56px;height:23px;"></div>
<div class="pbtn" style="left:1617px;top:429px;width:56px;height:23px;"></div>
<svg style="left:1414.5px;top:434px" width="15" height="12" viewBox="0 0 15 12" ><path d="M0.1 5.9C0.9 3 3.6 0.1 7.5 0.1C11.2 0.1 13.8 2.4 14.9 5.7C13.8 9.2 11.2 11.1 7.5 11.1C3.9 11.1 1.2 9.2 0.1 5.9Z" fill="#000"/><path d="M2.5 4.7C2.6 7.3 4.7 9.3 7.4 9.3C10.1 9.3 12.2 7.3 12.4 4.7L10.8 4.1C10.7 6.1 9.4 7.7 7.4 7.7C5.5 7.7 4.2 6.1 4.1 4.1Z" fill="#fff"/><path d="M5.9 3.6C6.4 3.1 7 3.1 7.5 3.5C6.9 3.6 6.6 4 6.5 4.6Z" fill="#fff" opacity=".55"/></svg>
<svg style="left:1470.5px;top:434px" width="15" height="12" viewBox="0 0 15 12" ><path d="M0.1 5.9C0.9 3 3.6 0.1 7.5 0.1C11.2 0.1 13.8 2.4 14.9 5.7C13.8 9.2 11.2 11.1 7.5 11.1C3.9 11.1 1.2 9.2 0.1 5.9Z" fill="#a9a9a9"/><path d="M2.5 4.7C2.6 7.3 4.7 9.3 7.4 9.3C10.1 9.3 12.2 7.3 12.4 4.7L10.8 4.1C10.7 6.1 9.4 7.7 7.4 7.7C5.5 7.7 4.2 6.1 4.1 4.1Z" fill="#ececec"/><path d="M5.9 3.6C6.4 3.1 7 3.1 7.5 3.5C6.9 3.6 6.6 4 6.5 4.6Z" fill="#ececec" opacity=".55"/></svg>
<svg style="left:1526.5px;top:433.5px" width="13" height="13" viewBox="0 0 13 13" ><path d="M4.8 0.6H8.2V4.8H12.4V8.2H8.2V12.4H4.8V8.2H0.6V4.8H4.8Z" fill="#f00" stroke="#b00000" stroke-width="0.8"/></svg>
<svg style="left:1581.5px;top:438px" width="13" height="5" viewBox="0 0 13 5" ><rect x="0.5" y="0.7" width="12" height="3.4" rx="0.8" fill="#a0a0a0" stroke="#8c8c8c" stroke-width="0.6"/></svg>
<svg style="left:1637px;top:433px" width="15" height="15" viewBox="0 0 15 15" ><path d="M0.3 14.6L1.6 10.8L11.2 1.2C11.9 0.5 13 0.5 13.7 1.2C14.4 1.9 14.4 3 13.7 3.7L4.1 13.3Z" fill="#e3a046"/><path d="M1.6 10.8L11.2 1.2L12.2 2.2L2.6 11.8Z" fill="#f3c26c"/><path d="M3.2 12.4L12.8 2.8L13.7 3.7L4.1 13.3Z" fill="#b87a2a"/><path d="M10 2.4L11.2 1.2C11.9 0.5 13 0.5 13.7 1.2C14.4 1.9 14.4 3 13.7 3.7L12.5 4.9Z" fill="#e0262a"/><path d="M0.3 14.6L0.9 12.8L2.1 14Z" fill="#5a4630"/></svg>
<div class="list" style="left:1394px;top:452px;width:279px;height:416px;"></div>
<div style="left:1395px;top:453px;width:277px;height:19px;background:#308cc6;"></div>
<svg style="left:1398.5px;top:456px" width="15" height="12" viewBox="0 0 15 12" ><path d="M0.1 5.9C0.9 3 3.6 0.1 7.5 0.1C11.2 0.1 13.8 2.4 14.9 5.7C13.8 9.2 11.2 11.1 7.5 11.1C3.9 11.1 1.2 9.2 0.1 5.9Z" fill="#0f3e5e"/><path d="M2.5 4.7C2.6 7.3 4.7 9.3 7.4 9.3C10.1 9.3 12.2 7.3 12.4 4.7L10.8 4.1C10.7 6.1 9.4 7.7 7.4 7.7C5.5 7.7 4.2 6.1 4.1 4.1Z" fill="#308cc6"/><path d="M5.9 3.6C6.4 3.1 7 3.1 7.5 3.5C6.9 3.6 6.6 4 6.5 4.6Z" fill="#308cc6" opacity=".55"/></svg>
<svg style="left:1418px;top:456px" width="11" height="14" viewBox="0 0 11 14" ><path d="M2.2 6V4.2C2.2 2.2 3.6 0.8 5.2 0.8C6.8 0.8 8.2 2.2 8.2 4.2V6" fill="none" stroke="#7f98ab" stroke-width="1.3"/><rect x="0.3" y="5.6" width="9.8" height="7.4" rx="0.8" fill="#7f98ab"/></svg>
<svg style="left:1398.5px;top:474.5px" width="15" height="12" viewBox="0 0 15 12" ><path d="M0.1 5.9C0.9 3 3.6 0.1 7.5 0.1C11.2 0.1 13.8 2.4 14.9 5.7C13.8 9.2 11.2 11.1 7.5 11.1C3.9 11.1 1.2 9.2 0.1 5.9Z" fill="#000"/><path d="M2.5 4.7C2.6 7.3 4.7 9.3 7.4 9.3C10.1 9.3 12.2 7.3 12.4 4.7L10.8 4.1C10.7 6.1 9.4 7.7 7.4 7.7C5.5 7.7 4.2 6.1 4.1 4.1Z" fill="#fff"/><path d="M5.9 3.6C6.4 3.1 7 3.1 7.5 3.5C6.9 3.6 6.6 4 6.5 4.6Z" fill="#fff" opacity=".55"/></svg>
<svg style="left:1418px;top:474.5px" width="11" height="14" viewBox="0 0 11 14" ><path d="M2.2 6V4.2C2.2 2.2 3.6 0.8 5.2 0.8C6.8 0.8 8.2 2.2 8.2 4.2V6" fill="none" stroke="#000" stroke-width="1.3"/><rect x="0.3" y="5.6" width="9.8" height="7.4" rx="0.8" fill="#000"/></svg>
<div style="left:1527px;top:870px;width:18px;height:1px;"><div style="left:0px;top:0;width:1px;height:1px;background:#bcbcbc;"></div><div style="left:3px;top:0;width:1px;height:1px;background:#bcbcbc;"></div><div style="left:6px;top:0;width:1px;height:1px;background:#bcbcbc;"></div><div style="left:9px;top:0;width:1px;height:1px;background:#bcbcbc;"></div><div style="left:12px;top:0;width:1px;height:1px;background:#bcbcbc;"></div><div style="left:15px;top:0;width:1px;height:1px;background:#bcbcbc;"></div></div>
<div style="left:1646px;top:878px;width:11px;height:11px;border:1px solid #6a6a6a;border-radius:3px;background:#f2f2f2;"></div>
<div style="left:1660px;top:878px;width:11px;height:11px;border:1px solid #6a6a6a;border-radius:3px;background:#f2f2f2;"></div>
<svg style="left:1646px;top:878px" width="11" height="11" viewBox="0 0 11 11" ><rect x="4.4" y="2.4" width="4.2" height="4.2" rx="1" fill="none" stroke="#5e5e5e" stroke-width="1"/><rect x="2.4" y="4.4" width="4.2" height="4.2" rx="1" fill="#f4f4f4" stroke="#5e5e5e" stroke-width="1"/></svg>
<svg style="left:1660px;top:878px" width="11" height="11" viewBox="0 0 11 11" ><path d="M3 3L8 8M8 3L3 8" stroke="#5a5a5a" stroke-width="1.9" stroke-linecap="square" stroke-dasharray="1.4 0.5"/></svg>
<div style="left:1394px;top:893px;width:279px;height:457px;border:1px solid #b4b4b4;background:#efefef;"></div>
<div class="combo" style="left:1462px;top:903px;width:201px;height:25px;"></div>
<svg style="left:1646px;top:912px" width="11" height="7" viewBox="0 0 11 7" ><path d="M1 1.2H10L5.5 5.8Z" fill="#4a4a4a"/></svg>
<div style="left:1405px;top:955px;width:258px;height:204px;border:1px solid #d2d2d2;border-radius:2px;background:#ededed;"></div>
<div class="combo dis" style="left:1501px;top:963px;width:150px;height:25px;"></div>
<svg style="left:1634px;top:972.5px" width="11" height="7" viewBox="0 0 11 7" ><path d="M1.5 1.5H9.5L5.5 5.5Z" fill="#c9c9c9"/></svg>
<div class="combo dis" style="left:1501px;top:990px;width:150px;height:25px;"></div>
<svg style="left:1634px;top:999.5px" width="11" height="7" viewBox="0 0 11 7" ><path d="M1.5 1.5H9.5L5.5 5.5Z" fill="#c9c9c9"/></svg>
<div class="combo dis" style="left:1501px;top:1017px;width:150px;height:25px;"></div>
<svg style="left:1634px;top:1026.5px" width="11" height="7" viewBox="0 0 11 7" ><path d="M1.5 1.5H9.5L5.5 5.5Z" fill="#c9c9c9"/></svg>
<div class="combo dis" style="left:1501px;top:1044px;width:150px;height:25px;"></div>
<svg style="left:1634px;top:1053.5px" width="11" height="7" viewBox="0 0 11 7" ><path d="M1.5 1.5H9.5L5.5 5.5Z" fill="#c9c9c9"/></svg>
<div class="edit" style="left:1501px;top:1071px;width:150px;height:25px;"></div>
<div class="edit" style="left:1501px;top:1098px;width:150px;height:25px;"></div>
<div class="edit" style="left:1501px;top:1125px;width:150px;height:25px;"></div>
<div style="left:1507px;top:997px;width:16px;height:10px;border:1px solid #555;background:#fff;"></div>
<div style="left:1507px;top:1029px;width:16px;height:1px;background:#666;"></div>
<div style="left:1674px;top:64px;width:36px;height:1286px;background:linear-gradient(90deg,#fbfbfb 0%,#f5f5f5 40%,#ededed 100%);"></div>
<div style="left:1673px;top:64px;width:1px;height:1286px;background:#b7b7b7;"></div>
<div style="left:1685px;top:68px;width:18px;height:4px;"><div style="left:0px;top:0px;width:1px;height:1px;background:#c0c0c0;"></div><div style="left:3px;top:0px;width:1px;height:1px;background:#c0c0c0;"></div><div style="left:6px;top:0px;width:1px;height:1px;background:#c0c0c0;"></div><div style="left:9px;top:0px;width:1px;height:1px;background:#c0c0c0;"></div><div style="left:12px;top:0px;width:1px;height:1px;background:#c0c0c0;"></div><div style="left:15px;top:0px;width:1px;height:1px;background:#c0c0c0;"></div><div style="left:0px;top:3px;width:1px;height:1px;background:#c0c0c0;"></div><div style="left:3px;top:3px;width:1px;height:1px;background:#c0c0c0;"></div><div style="left:6px;top:3px;width:1px;height:1px;background:#c0c0c0;"></div><div style="left:9px;top:3px;width:1px;height:1px;background:#c0c0c0;"></div><div style="left:12px;top:3px;width:1px;height:1px;background:#c0c0c0;"></div><div style="left:15px;top:3px;width:1px;height:1px;background:#c0c0c0;"></div></div>
<div class="rbtn" style="left:1677px;top:76px;width:29px;height:29px;"></div>
<div class="rbtn" style="left:1677px;top:106px;width:29px;height:29px;"></div>
<div class="rbtn" style="left:1677px;top:143px;width:29px;height:29px;"></div>
<div class="rbtn" style="left:1677px;top:210px;width:29px;height:29px;"></div>
<svg style="left:1679.5px;top:78.5px" width="22" height="22" viewBox="0 0 22 22" ><rect x="0.5" y="0.5" width="21" height="21" rx="2" fill="#fdfdfd" stroke="#a4a4a4"/><rect x="1" y="1" width="20" height="3" fill="#000"/><rect x="1" y="1" width="2" height="2" fill="#fff"/><path d="M5 9L9 7V16L5 18Z" fill="#8a8a8a" stroke="#555" stroke-width=".6"/><path d="M8 8L12 6V15L8 17Z" fill="#b5b5b5" stroke="#666" stroke-width=".6"/><path d="M11 8L15 6V14L11 16Z" fill="#f2b0b0" stroke="#c06060" stroke-width=".6"/></svg>
<svg style="left:1679.5px;top:108.5px" width="22" height="22" viewBox="0 0 22 22" ><rect x="0.5" y="0.5" width="21" height="21" rx="2" fill="#fdfdfd" stroke="#a4a4a4"/><rect x="1" y="1" width="20" height="3" fill="#000"/><rect x="1" y="1" width="2" height="2" fill="#fff"/><rect x="5.5" y="8.5" width="8" height="6" fill="#f1e7b0" stroke="#a89a58" stroke-width=".8"/><circle cx="13" cy="14" r="3.2" fill="#f1e7b0" stroke="#a89a58" stroke-width=".8"/></svg>
<svg style="left:1679.5px;top:145.5px" width="22" height="22" viewBox="0 0 22 22" ><rect x="0.5" y="0.5" width="21" height="21" rx="2" fill="#fdfdfd" stroke="#a4a4a4"/><rect x="1" y="1" width="20" height="3" fill="#000"/><rect x="1" y="1" width="2" height="2" fill="#fff"/><rect x="3" y="6.3" width="3" height="2.6" fill="#000"/><rect x="8.2" y="6.3" width="10" height="2.6" fill="#d9d9d9" stroke="#b0b0b0" stroke-width=".5"/><rect x="3" y="10.899999999999999" width="3" height="2.6" fill="#000"/><rect x="8.2" y="10.899999999999999" width="10" height="2.6" fill="#fff" stroke="#b0b0b0" stroke-width=".5"/><rect x="3" y="15.5" width="3" height="2.6" fill="#000"/><rect x="8.2" y="15.5" width="10" height="2.6" fill="#d9d9d9" stroke="#b0b0b0" stroke-width=".5"/></svg>
<svg style="left:1679.5px;top:175.5px" width="22" height="22" viewBox="0 0 22 22" ><rect x="0.5" y="0.5" width="21" height="21" rx="2" fill="#fdfdfd" stroke="#a4a4a4"/><rect x="1" y="1" width="20" height="3" fill="#000"/><rect x="1" y="1" width="2" height="2" fill="#fff"/><path d="M3 12H18" stroke="#f08080" stroke-width=".7"/><path d="M5 6.5V17.5M5 7.5L8 10V14L5 16.5" fill="none" stroke="#555" stroke-width=".8"/><rect x="8" y="9.5" width="4" height="5" fill="#ddd" stroke="#666" stroke-width=".6"/><rect x="12" y="9.5" width="4.5" height="5" fill="#6a6a6a"/></svg>
<svg style="left:1679.5px;top:212.5px" width="22" height="22" viewBox="0 0 22 22" ><rect x="0.5" y="0.5" width="21" height="21" rx="2" fill="#fdfdfd" stroke="#a4a4a4"/><rect x="1" y="1" width="20" height="3" fill="#000"/><rect x="1" y="1" width="2" height="2" fill="#fff"/><path d="M3 7.5H13M3 10H12M3 12.5H14M3 15H13" stroke="#c9c9c9" stroke-width="1"/><rect x="1" y="17.5" width="20" height="3.5" fill="#e4e4e4" stroke="#9a9a9a" stroke-width=".5"/><path d="M8 19.3H19" stroke="#8a8a8a" stroke-width=".9"/></svg>
<div style="left:1683px;top:139px;width:17px;height:1px;background:#d5d5d5;"></div>
<div style="left:1683px;top:206px;width:17px;height:1px;background:#d5d5d5;"></div>
<svg style="left:19px;top:32px" width="37" height="25" viewBox="0 0 37 25" ><circle cx="16.3" cy="15.8" r="4" fill="none" stroke="#ff3030" stroke-width=".9"/><path d="M14.3 12.2L23 6.8" stroke="#444" stroke-width="0.9" fill="none"/><path d="M21.3 4.2L26.6 12.6" stroke="#ff3030" stroke-width="0.9" fill="none"/></svg>
<svg style="left:66px;top:30px" width="29" height="29" viewBox="0 0 29 29" ><path d="M6 19.6L22 9.2" stroke="#000" stroke-width="1" fill="none"/><circle cx="6.1" cy="19.6" r="1.6" fill="#ff0000"/><circle cx="21.9" cy="9.2" r="1.6" fill="#ff0000"/></svg>
<svg style="left:96px;top:30px" width="29" height="29" viewBox="0 0 29 29" ><path d="M5 20L23 8.5" stroke="#000" stroke-width="1" fill="none"/><path d="M3 21.5L8.6 20.3L6.4 16.9Z" fill="#000"/><path d="M25 7.2L19.4 8.4L21.6 11.8Z" fill="#000"/><circle cx="14.1" cy="14.4" r="1.6" fill="#ff0000"/></svg>
<svg style="left:126px;top:30px" width="29" height="29" viewBox="0 0 29 29" ><path d="M6 19.6L22 9.2" stroke="#000" stroke-width="1" fill="none"/><path d="M25 7.2L19.4 8.4L21.6 11.8Z" fill="#000"/><circle cx="6.1" cy="19.6" r="1.6" fill="#ff0000"/></svg>
<svg style="left:104px;top:70px" width="17" height="17" viewBox="0 0 17 17" ><defs><linearGradient id="qg" x1="0" y1="0" x2="1" y2="1"><stop offset="0" stop-color="#9aa6d0"/><stop offset=".45" stop-color="#3c4f9a"/><stop offset="1" stop-color="#142a78"/></linearGradient></defs><circle cx="8.05" cy="7.75" r="5.55" fill="#fcfcfc" stroke="url(#qg)" stroke-width="2"/><path d="M4.5 7.6H9.5M7.6 4.6V9.8" stroke="#b8b8b8" stroke-width=".7"/><path d="M5 9.4H8M9 5.4L10 4.6" stroke="#f0a0a0" stroke-width=".6"/><path d="M8.6 8.2L12.4 12.1" stroke="#f3a512" stroke-width="1.9" stroke-linecap="round"/><path d="M8.4 7.6L11.5 10.8" stroke="#ffd970" stroke-width=".7" stroke-linecap="round"/><circle cx="13.3" cy="13.1" r="1.05" fill="#e06a6a"/></svg>
<svg style="left:1357px;top:71px" width="16" height="16" viewBox="0 0 16 16" ><path d="M11.6 1.9C12.6 1.6 13.4 2.3 13 3.3C11.6 6.6 7 11.6 1.2 14.2C4.6 11.2 8.6 6.4 11.6 1.9Z" fill="#111"/><path d="M3.9 2.1C6 5 9 8.6 13.2 11.3C14.4 12.2 14.2 13.6 13 13.9C11.8 14.2 10.6 13.4 9.6 11.9C8 9.5 5.6 5.4 3.9 2.1Z" fill="#111"/></svg>
<svg style="left:8px;top:116px" width="40" height="40" viewBox="0 0 40 40" ><path d="M9.6 27.3L30.5 13.5" stroke="#000" stroke-width="1" fill="none"/><circle cx="9.6" cy="27.3" r="1.9" fill="#ff0000"/><circle cx="30.5" cy="13.5" r="1.9" fill="#ff0000"/></svg>
<svg style="left:48px;top:116px" width="40" height="40" viewBox="0 0 40 40" ><path d="M10.5 26.4L33 26.4" stroke="#5a5aff" stroke-width="1" fill="none"/><path d="M10.5 26.4L30.9 13.2" stroke="#000" stroke-width="1" fill="none"/><path d="M25.4 17.3A17.5 17.5 0 0 1 27.9 26.2" fill="none" stroke="#ff0000" stroke-width=".9"/><circle cx="10.5" cy="26.4" r="1.9" fill="#ff0000"/></svg>
<svg style="left:8px;top:156px" width="40" height="40" viewBox="0 0 40 40" ><path d="M10.6 19.5L30.8 19.5" stroke="#000" stroke-width="1" fill="none"/><circle cx="10.6" cy="19.5" r="1.9" fill="#ff0000"/></svg>
<svg style="left:48px;top:156px" width="40" height="40" viewBox="0 0 40 40" ><path d="M19.5 9L19.5 29.5" stroke="#000" stroke-width="1" fill="none"/><circle cx="19.5" cy="29.5" r="1.9" fill="#ff0000"/></svg>
<svg style="left:8px;top:204px" width="40" height="40" viewBox="0 0 40 40" ><path d="M7.3 29.4L32 29.4" stroke="#ff0000" stroke-width="1" fill="none"/><path d="M7.3 29.4L22.2 9" stroke="#ff0000" stroke-width="1" fill="none"/><path d="M7.3 29.4L29.7 17.5" stroke="#000" stroke-width="1" fill="none"/><path d="M18.5 14.5A19.5 19.5 0 0 1 26.6 29" fill="none" stroke="#5a5aff" stroke-width=".9"/><path d="M23 12.5H28M23 14.6H28M28 22.4H33M28 24.5H33" stroke="#0000ff" stroke-width="1"/></svg>
<svg style="left:8px;top:252px" width="40" height="40" viewBox="0 0 40 40" ><path d="M7.2 21.1L28.1 10.4" stroke="#ff0000" stroke-width="1" fill="none"/><path d="M12.2 30.9L33 20.4" stroke="#000" stroke-width="1" fill="none"/><path d="M13.5 17.8L18.5 27.7" stroke="#5a5aff" stroke-width="1" fill="none"/></svg>
<svg style="left:48px;top:252px" width="40" height="40" viewBox="0 0 40 40" ><path d="M7.1 21.1L28 10.4" stroke="#ff0000" stroke-width="1" fill="none"/><path d="M12.3 30.9L32.8 20.4" stroke="#000" stroke-width="1" fill="none"/><circle cx="18.5" cy="27.6" r="1.9" fill="#ff0000"/></svg>
<svg style="left:8px;top:300px" width="40" height="40" viewBox="0 0 40 40" ><circle cx="14.4" cy="23.7" r="7" fill="none" stroke="#ff0000" stroke-width="1"/><path d="M13.1 16.6L31.5 12.4" stroke="#000" stroke-width="1" fill="none"/><circle cx="31.5" cy="12.4" r="1.9" fill="#ff0000"/></svg>
<svg style="left:48px;top:300px" width="40" height="40" viewBox="0 0 40 40" ><circle cx="14.2" cy="23.7" r="7" fill="none" stroke="#ff0000" stroke-width="1"/><path d="M13.1 16.6L29.8 13.2" stroke="#000" stroke-width="1" fill="none"/><circle cx="30.7" cy="16.4" r="3" fill="none" stroke="#ff0000" stroke-width="1"/></svg>
<svg style="left:8px;top:340px" width="40" height="40" viewBox="0 0 40 40" ><circle cx="16.1" cy="25.2" r="7" fill="none" stroke="#ff0000" stroke-width="1"/><path d="M13.1 18.2L26.9 10.9" stroke="#000" stroke-width="1" fill="none"/><path d="M24.2 5.5L33.5 20.2" stroke="#ff0000" stroke-width="1" fill="none"/></svg>
<svg style="left:8px;top:388px" width="40" height="40" viewBox="0 0 40 40" ><path d="M7.2 31.4L33 9.4" stroke="#000" stroke-width="1" fill="none"/><path d="M17.6 30.8L22.8 9.4" stroke="#000" stroke-width="1" fill="none"/><path d="M22.3 11.8A9 9 0 0 1 27.3 14.2" fill="none" stroke="#ff0000" stroke-width=".9"/><circle cx="19.9" cy="20.5" r="1.9" fill="#ff0000"/></svg>
<svg style="left:48px;top:388px" width="40" height="40" viewBox="0 0 40 40" ><path d="M7.1 31.4L32.8 9.4" stroke="#000" stroke-width="1" fill="none"/><path d="M13.7 13.5L25.7 26.9" stroke="#000" stroke-width="1" fill="none"/><circle cx="20" cy="20.4" r="1.9" fill="#ff0000"/></svg>
<svg style="left:8px;top:436px" width="40" height="40" viewBox="0 0 40 40" ><path d="M6.5 15C9 10.5 13.5 6.5 17.5 8.2C21.5 10.5 17 17 13 22C10 25.8 11.5 28 14.8 26C19 23.2 22.5 14.5 26.5 16.8C30 19.2 24 24.5 25.2 27.2C26.6 30 30.5 27.5 32.5 31.5" fill="none" stroke="#111" stroke-width="1.1"/></svg>
<svg style="left:816px;top:1356px" width="20" height="32" viewBox="0 0 20 32" ><path d="M1.5 10.5C1.5 4 4.5 1.5 10 1.5C15.5 1.5 18.5 4 18.5 10.5V21C18.5 27 15.5 30.5 10 30.5C4.5 30.5 1.5 27 1.5 21Z" fill="#fff" stroke="#555" stroke-width="1"/><path d="M1.5 14.5C6 13 14 13 18.5 14.5M10 11V14" fill="none" stroke="#555" stroke-width="1"/><rect x="8.4" y="4" width="3.2" height="7" rx="1.6" fill="#fff" stroke="#555" stroke-width="1"/></svg>
<div id="txt">
<span class="t" style="left:13.8px;top:8.29px;font-size:13px;color:#000;transform-origin:0 0;transform:scaleX(0.8782);-webkit-text-stroke:0.25px;"><u>F</u>ile</span>
<span class="t" style="left:47.2px;top:8.29px;font-size:13px;color:#000;transform-origin:0 0;transform:scaleX(0.8926);-webkit-text-stroke:0.25px;"><u>E</u>dit</span>
<span class="t" style="left:81.6px;top:8.29px;font-size:13px;color:#000;transform-origin:0 0;transform:scaleX(0.8979);-webkit-text-stroke:0.25px;"><u>V</u>iew</span>
<span class="t" style="left:121.2px;top:8.29px;font-size:13px;color:#000;transform-origin:0 0;transform:scaleX(0.8716);-webkit-text-stroke:0.25px;"><u>S</u>elect</span>
<span class="t" style="left:167.1px;top:8.29px;font-size:13px;color:#000;transform-origin:0 0;transform:scaleX(0.9261);-webkit-text-stroke:0.25px;"><u>D</u>raw</span>
<span class="t" style="left:209.3px;top:8.29px;font-size:13px;color:#000;transform-origin:0 0;transform:scaleX(0.9345);-webkit-text-stroke:0.25px;">D<u>i</u>mension</span>
<span class="t" style="left:280.8px;top:8.29px;font-size:13px;color:#000;transform-origin:0 0;transform:scaleX(0.9766);-webkit-text-stroke:0.25px;"><u>M</u>odify</span>
<span class="t" style="left:332.2px;top:8.29px;font-size:13px;color:#000;transform-origin:0 0;transform:scaleX(0.8724);-webkit-text-stroke:0.25px;"><u>S</u>nap</span>
<span class="t" style="left:372.8px;top:8.29px;font-size:13px;color:#000;transform-origin:0 0;transform:scaleX(0.9867);-webkit-text-stroke:0.25px;"><u>I</u>nfo</span>
<span class="t" style="left:409.1px;top:8.29px;font-size:13px;color:#000;transform-origin:0 0;transform:scaleX(0.8945);-webkit-text-stroke:0.25px;"><u>L</u>ayer</span>
<span class="t" style="left:453.0px;top:8.29px;font-size:13px;color:#000;transform-origin:0 0;transform:scaleX(0.9026);-webkit-text-stroke:0.25px;"><u>B</u>lock</span>
<span class="t" style="left:495.8px;top:8.29px;font-size:13px;color:#000;transform-origin:0 0;transform:scaleX(0.9384);-webkit-text-stroke:0.25px;"><u>W</u>indow</span>
<span class="t" style="left:553.3px;top:8.29px;font-size:13px;color:#000;transform-origin:0 0;transform:scaleX(0.9319);-webkit-text-stroke:0.25px;"><u>M</u>isc</span>
<span class="t" style="left:592.8px;top:8.29px;font-size:13px;color:#000;transform-origin:0 0;transform:scaleX(0.9308);-webkit-text-stroke:0.25px;"><u>H</u>elp</span>
<span class="t" style="left:707.9px;top:72.99px;font-size:13px;color:#000;transform-origin:0 0;transform:scaleX(0.9701);-webkit-text-stroke:0.25px;">fan-grid.dxf</span>
<span class="t" style="left:97.0px;top:1220.49px;font-size:13px;color:#0000cc;transform-origin:0 0;transform:scaleX(0.8895);-webkit-text-stroke:0.25px;font-style:italic;clip-path:inset(6.5px 0 0 0);">Command: save</span>
<span class="t" style="left:97.0px;top:1235.99px;font-size:13px;color:#cc0000;transform-origin:0 0;transform:scaleX(0.9083);-webkit-text-stroke:0.25px;">Saving to file format version "R15 (2000) DXF Drawing (dxflib) (*.dxf)".</span>
<span class="t" style="left:97.0px;top:1253.29px;font-size:13px;color:#cc0000;transform-origin:0 0;transform:scaleX(0.9046);-webkit-text-stroke:0.25px;">Black entities and layers are saved as white.</span>
<span class="t" style="left:97.0px;top:1270.29px;font-size:13px;color:#cc0000;transform-origin:0 0;transform:scaleX(0.9189);-webkit-text-stroke:0.25px;">Custom colors are adjusted to the nearest fixed color.</span>
<span class="t" style="left:97.0px;top:1286.89px;font-size:13px;color:#000;transform-origin:0 0;transform:scaleX(0.9432);-webkit-text-stroke:0.25px;">Saved file: /home/nailxx/Dropbox/Figuro/texts/qcad-modeling-basics/dxf/fan-grid.dxf</span>
<span class="t" style="left:97.0px;top:1303.99px;font-size:13px;color:#000;transform-origin:0 0;transform:scaleX(0.8977);-webkit-text-stroke:0.25px;">Format: R15 (2000) DXF Drawing (dxflib) (*.dxf)</span>
<span class="t" style="left:93.3px;top:1330.99px;font-size:13px;color:#000;transform-origin:0 0;transform:scaleX(0.8937);-webkit-text-stroke:0.25px;">Choose line:</span>
<span class="t" style="left:6.3px;top:1356.99px;font-size:13px;color:#000;transform-origin:0 0;transform:scaleX(0.8814);-webkit-text-stroke:0.25px;">160.0871,22.8723</span>
<span class="t" style="left:6.3px;top:1376.99px;font-size:13px;color:#000;transform-origin:0 0;transform:scaleX(0.8651);-webkit-text-stroke:0.25px;">@77.5871,-59.6277</span>
<span class="t" style="left:295.2px;top:1356.99px;font-size:13px;color:#000;transform-origin:0 0;transform:scaleX(0.8835);-webkit-text-stroke:0.25px;">161.7128&lt;8°</span>
<span class="t" style="left:295.2px;top:1376.99px;font-size:13px;color:#000;transform-origin:0 0;transform:scaleX(0.8704);-webkit-text-stroke:0.25px;">@97.8531&lt;322°</span>
<span class="t" style="left:741.2px;top:1367.29px;font-size:13px;color:#000;transform-origin:0 0;transform:scaleX(0.8972);-webkit-text-stroke:0.25px;">Choose line</span>
<span class="t" style="left:849.8px;top:1367.29px;font-size:13px;color:#000;transform-origin:0 0;transform:scaleX(0.8797);-webkit-text-stroke:0.25px;">Cancel</span>
<span class="t" style="left:1076.1px;top:1367.29px;font-size:13px;color:#000;transform-origin:0 0;transform:scaleX(0.9182);-webkit-text-stroke:0.25px;">No entities selected.</span>
<span class="t" style="left:1344.0px;top:1204.99px;font-size:13px;color:#000;transform-origin:0 0;transform:scaleX(0.8594);-webkit-text-stroke:0.25px;">10 &lt; 100</span>
<span class="t" style="left:1398.3px;top:65.89px;font-size:13px;color:#000;transform-origin:0 0;transform:scaleX(0.8950);-webkit-text-stroke:0.25px;">Block List</span>
<span class="t" style="left:1398.2px;top:412.89px;font-size:13px;color:#000;transform-origin:0 0;transform:scaleX(0.8887);-webkit-text-stroke:0.25px;">Layer List</span>
<span class="t" style="left:1398.2px;top:877.09px;font-size:13px;color:#000;transform-origin:0 0;transform:scaleX(0.9261);-webkit-text-stroke:0.25px;">Property Editor</span>
<span class="t" style="left:1442.3px;top:108.69px;font-size:13px;color:#000;transform-origin:0 0;transform:scaleX(0.8881);-webkit-text-stroke:0.25px;">*Model_Space</span>
<span class="t" style="left:1442.3px;top:126.79px;font-size:13px;color:#000;transform-origin:0 0;transform:scaleX(0.8719);-webkit-text-stroke:0.25px;">*Paper_Space</span>
<span class="t" style="left:1442.3px;top:144.59px;font-size:13px;color:#000;transform-origin:0 0;transform:scaleX(0.8729);-webkit-text-stroke:0.25px;">*Paper_Space0</span>
<span class="t" style="left:1435.9px;top:455.59px;font-size:13px;color:#fff;-webkit-text-stroke:0.25px;">0</span>
<span class="t" style="left:1436.2px;top:474.49px;font-size:13px;color:#000;transform-origin:0 0;transform:scaleX(0.9217);-webkit-text-stroke:0.25px;">helpers</span>
<span class="t" style="left:1404.4px;top:909.09px;font-size:13px;color:#000;transform-origin:0 0;transform:scaleX(0.9003);-webkit-text-stroke:0.25px;">Selection:</span>
<span class="t" style="left:1467.2px;top:909.09px;font-size:13px;color:#000;transform-origin:0 0;transform:scaleX(0.8980);-webkit-text-stroke:0.25px;">No Selection</span>
<span class="t" style="left:1404.4px;top:936.99px;font-size:13px;color:#bababa;transform-origin:0 0;transform:scaleX(0.9090);-webkit-text-stroke:0.25px;">General Properties</span>
<span class="t" style="left:1463.3px;top:968.79px;font-size:13px;color:#bababa;transform-origin:0 0;transform:scaleX(0.8744);-webkit-text-stroke:0.25px;">Layer:</span>
<span class="t" style="left:1463.7px;top:995.79px;font-size:13px;color:#bababa;transform-origin:0 0;transform:scaleX(0.8995);-webkit-text-stroke:0.25px;">Color:</span>
<span class="t" style="left:1433.5px;top:1022.79px;font-size:13px;color:#bababa;transform-origin:0 0;transform:scaleX(0.9334);-webkit-text-stroke:0.25px;">Lineweight:</span>
<span class="t" style="left:1446.0px;top:1049.79px;font-size:13px;color:#bababa;transform-origin:0 0;transform:scaleX(0.9267);-webkit-text-stroke:0.25px;">Linetype:</span>
<span class="t" style="left:1416.0px;top:1076.79px;font-size:13px;color:#bababa;transform-origin:0 0;transform:scaleX(0.8875);-webkit-text-stroke:0.25px;">Linetype Scale:</span>
<span class="t" style="left:1430.0px;top:1103.79px;font-size:13px;color:#bababa;transform-origin:0 0;transform:scaleX(0.9167);-webkit-text-stroke:0.25px;">Draw Order:</span>
<span class="t" style="left:1454.1px;top:1130.79px;font-size:13px;color:#bababa;transform-origin:0 0;transform:scaleX(0.9105);-webkit-text-stroke:0.25px;">Handle:</span>
<span class="t" style="left:1526.3px;top:995.79px;font-size:13px;color:#bababa;transform-origin:0 0;transform:scaleX(0.8711);-webkit-text-stroke:0.25px;">By Layer</span>
<span class="t" style="left:1526.3px;top:1022.79px;font-size:13px;color:#bababa;transform-origin:0 0;transform:scaleX(0.8711);-webkit-text-stroke:0.25px;">By Layer</span>
<span class="t" style="left:1506.1px;top:1049.79px;font-size:13px;color:#bababa;transform-origin:0 0;transform:scaleX(0.8731);-webkit-text-stroke:0.25px;">By Layer</span>
<span class="t" style="left:1543.4px;top:86.69px;font-size:13px;color:#888;-webkit-text-stroke:0.25px;">a</span>
<span class="t" style="left:1552.0px;top:86.69px;font-size:13px;color:#888;-webkit-text-stroke:0.25px;">b</span>
<span class="t" style="left:161.9px;top:97.74px;font-size:12px;color:#000;transform:translateX(-50%);">-20</span>
<span class="t" style="left:218.9px;top:97.74px;font-size:12px;color:#000;transform:translateX(-50%);">-10</span>
<span class="t" style="left:276.9px;top:97.74px;font-size:12px;color:#000;transform:translateX(-50%);">0</span>
<span class="t" style="left:333.9px;top:97.74px;font-size:12px;color:#000;transform:translateX(-50%);">10</span>
<span class="t" style="left:390.9px;top:97.74px;font-size:12px;color:#000;transform:translateX(-50%);">20</span>
<span class="t" style="left:447.9px;top:97.74px;font-size:12px;color:#000;transform:translateX(-50%);">30</span>
<span class="t" style="left:505.9px;top:97.74px;font-size:12px;color:#000;transform:translateX(-50%);">40</span>
<span class="t" style="left:562.9px;top:97.74px;font-size:12px;color:#000;transform:translateX(-50%);">50</span>
<span class="t" style="left:619.9px;top:97.74px;font-size:12px;color:#000;transform:translateX(-50%);">60</span>
<span class="t" style="left:677.9px;top:97.74px;font-size:12px;color:#000;transform:translateX(-50%);">70</span>
<span class="t" style="left:734.9px;top:97.74px;font-size:12px;color:#000;transform:translateX(-50%);">80</span>
<span class="t" style="left:791.9px;top:97.74px;font-size:12px;color:#000;transform:translateX(-50%);">90</span>
<span class="t" style="left:848.9px;top:97.74px;font-size:12px;color:#000;transform:translateX(-50%);">100</span>
<span class="t" style="left:906.9px;top:97.74px;font-size:12px;color:#000;transform:translateX(-50%);">110</span>
<span class="t" style="left:963.9px;top:97.74px;font-size:12px;color:#000;transform:translateX(-50%);">120</span>
<span class="t" style="left:1020.9px;top:97.74px;font-size:12px;color:#000;transform:translateX(-50%);">130</span>
<span class="t" style="left:1077.9px;top:97.74px;font-size:12px;color:#000;transform:translateX(-50%);">140</span>
<span class="t" style="left:1135.9px;top:97.74px;font-size:12px;color:#000;transform:translateX(-50%);">150</span>
<span class="t" style="left:1192.9px;top:97.74px;font-size:12px;color:#000;transform:translateX(-50%);">160</span>
<span class="t" style="left:1249.9px;top:97.74px;font-size:12px;color:#000;transform:translateX(-50%);">170</span>
<span class="t" style="left:1307.9px;top:97.74px;font-size:12px;color:#000;transform:translateX(-50%);">180</span>
<span class="t" style="left:1364.9px;top:97.74px;font-size:12px;color:#000;transform:translateX(-50%);">190</span>
<span class="t" style="left:0;top:0;font-size:12px;color:#000;transform-origin:0 0;transform:translate(95.24px,1201px) rotate(-90deg) scaleX(0.94);">-10</span>
<span class="t" style="left:0;top:0;font-size:12px;color:#000;transform-origin:0 0;transform:translate(95.24px,1137px) rotate(-90deg) scaleX(0.94);">0</span>
<span class="t" style="left:0;top:0;font-size:12px;color:#000;transform-origin:0 0;transform:translate(95.24px,1084px) rotate(-90deg) scaleX(0.94);">10</span>
<span class="t" style="left:0;top:0;font-size:12px;color:#000;transform-origin:0 0;transform:translate(95.24px,1027px) rotate(-90deg) scaleX(0.94);">20</span>
<span class="t" style="left:0;top:0;font-size:12px;color:#000;transform-origin:0 0;transform:translate(95.24px,970px) rotate(-90deg) scaleX(0.94);">30</span>
<span class="t" style="left:0;top:0;font-size:12px;color:#000;transform-origin:0 0;transform:translate(95.24px,912px) rotate(-90deg) scaleX(0.94);">40</span>
<span class="t" style="left:0;top:0;font-size:12px;color:#000;transform-origin:0 0;transform:translate(95.24px,855px) rotate(-90deg) scaleX(0.94);">50</span>
<span class="t" style="left:0;top:0;font-size:12px;color:#000;transform-origin:0 0;transform:translate(95.24px,798px) rotate(-90deg) scaleX(0.94);">60</span>
<span class="t" style="left:0;top:0;font-size:12px;color:#000;transform-origin:0 0;transform:translate(95.24px,740px) rotate(-90deg) scaleX(0.94);">70</span>
<span class="t" style="left:0;top:0;font-size:12px;color:#000;transform-origin:0 0;transform:translate(95.24px,683px) rotate(-90deg) scaleX(0.94);">80</span>
<span class="t" style="left:0;top:0;font-size:12px;color:#000;transform-origin:0 0;transform:translate(95.24px,626px) rotate(-90deg) scaleX(0.94);">90</span>
<span class="t" style="left:0;top:0;font-size:12px;color:#000;transform-origin:0 0;transform:translate(95.24px,572px) rotate(-90deg) scaleX(0.94);">100</span>
<span class="t" style="left:0;top:0;font-size:12px;color:#000;transform-origin:0 0;transform:translate(95.24px,514px) rotate(-90deg) scaleX(0.94);">110</span>
<span class="t" style="left:0;top:0;font-size:12px;color:#000;transform-origin:0 0;transform:translate(95.24px,457px) rotate(-90deg) scaleX(0.94);">120</span>
<span class="t" style="left:0;top:0;font-size:12px;color:#000;transform-origin:0 0;transform:translate(95.24px,400px) rotate(-90deg) scaleX(0.94);">130</span>
<span class="t" style="left:0;top:0;font-size:12px;color:#000;transform-origin:0 0;transform:translate(95.24px,343px) rotate(-90deg) scaleX(0.94);">140</span>
<span class="t" style="left:0;top:0;font-size:12px;color:#000;transform-origin:0 0;transform:translate(95.24px,285px) rotate(-90deg) scaleX(0.94);">150</span>
<span class="t" style="left:0;top:0;font-size:12px;color:#000;transform-origin:0 0;transform:translate(95.24px,228px) rotate(-90deg) scaleX(0.94);">160</span>
<span class="t" style="left:0;top:0;font-size:12px;color:#000;transform-origin:0 0;transform:translate(95.24px,171px) rotate(-90deg) scaleX(0.94);">170</span>
</div>
</div>
</body></html>
